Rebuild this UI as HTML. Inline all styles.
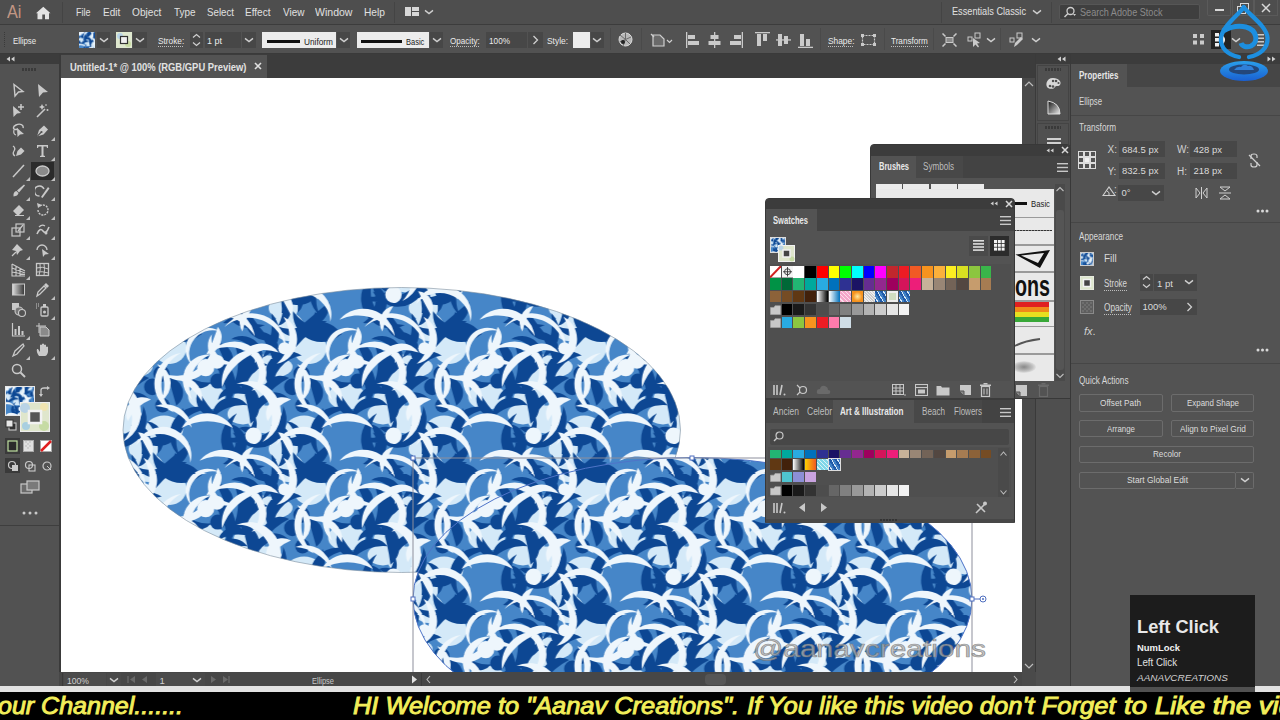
<!DOCTYPE html><html><head><meta charset="utf-8"><style>*{margin:0;padding:0;box-sizing:border-box}
html,body{width:1280px;height:720px;overflow:hidden;background:#535353;font-family:"Liberation Sans",sans-serif;color:#dcdcdc}
.a{position:absolute}
.t{position:absolute;white-space:nowrap;line-height:1}
</style></head><body><div class="a" style="left:0px;top:0px;width:1280px;height:24px;background:#4e4e4e;"></div>
<div class="a" style="left:0px;top:24px;width:1280px;height:1px;background:#3c3c3c;"></div>
<div class="a" style="left:0px;top:25px;width:1280px;height:28px;background:#525252;"></div>
<div class="a" style="left:0px;top:53px;width:1280px;height:1px;background:#3a3a3a;"></div>
<div class="a" style="left:0px;top:54px;width:1280px;height:10px;background:#3c3c3c;"></div>
<div class="a" style="left:0px;top:64px;width:59px;height:608px;background:#525252;"></div>
<div class="a" style="left:59px;top:54px;width:2px;height:632px;background:#3a3a3a;"></div>
<div class="a" style="left:61px;top:54px;width:975px;height:24px;background:#3c3c3c;"></div>
<div class="a" style="left:61px;top:55px;width:206px;height:23px;background:#535353;"></div>
<div class="a" style="left:61px;top:78px;width:961px;height:594px;background:#ffffff;"></div>
<div class="a" style="left:1022px;top:78px;width:14px;height:594px;background:#4a4a4a;"></div>
<div class="a" style="left:0px;top:672px;width:59px;height:14px;background:#525252;"></div>
<div class="a" style="left:59px;top:672px;width:977px;height:14px;background:#474747;"></div>
<div class="a" style="left:1035px;top:54px;width:1px;height:632px;background:#3a3a3a;"></div>
<div class="a" style="left:1036px;top:64px;width:35px;height:622px;background:#4f4f4f;"></div>
<div class="a" style="left:1070px;top:54px;width:1px;height:632px;background:#3a3a3a;"></div>
<div class="a" style="left:1071px;top:64px;width:209px;height:622px;background:#535353;"></div>
<div class="a" style="left:0px;top:686px;width:1280px;height:6px;background:#e2e2e2;"></div>
<div class="a" style="left:0px;top:692px;width:1280px;height:28px;background:#000000;"></div>
<div class="t fw" style="left:7.3px;top:2.56px;font-size:18px;color:#c29684;--w:14.5px;">Ai</div>
<svg class="a" style="left:36px;top:6px;" width="15" height="14" viewBox="0 0 15 14"><path d="M7.3,0.8 L14.5,7.3 L13,7.3 L13,13.2 L9,13.2 L9,8.5 L6.3,8.5 L6.3,13.2 L1.5,13.2 L1.5,7.3 L0,7.3 Z" fill="#e2e2e2"/></svg>
<div class="a" style="left:62px;top:2px;width:1px;height:21px;background:#444444;"></div>
<div class="t fw" style="left:75.8px;top:6.71px;font-size:10.5px;color:#e0e0e0;--w:14.5px;">File</div>
<div class="t fw" style="left:102.7px;top:6.71px;font-size:10.5px;color:#e0e0e0;--w:17.3px;">Edit</div>
<div class="t fw" style="left:132px;top:6.71px;font-size:10.5px;color:#e0e0e0;--w:29.3px;">Object</div>
<div class="t fw" style="left:173.5px;top:6.71px;font-size:10.5px;color:#e0e0e0;--w:21.5px;">Type</div>
<div class="t fw" style="left:206.5px;top:6.71px;font-size:10.5px;color:#e0e0e0;--w:27px;">Select</div>
<div class="t fw" style="left:245px;top:6.71px;font-size:10.5px;color:#e0e0e0;--w:25.5px;">Effect</div>
<div class="t fw" style="left:282.5px;top:6.71px;font-size:10.5px;color:#e0e0e0;--w:21.5px;">View</div>
<div class="t fw" style="left:315px;top:6.71px;font-size:10.5px;color:#e0e0e0;--w:37.5px;">Window</div>
<div class="t fw" style="left:363.5px;top:6.71px;font-size:10.5px;color:#e0e0e0;--w:21px;">Help</div>
<div class="a" style="left:394px;top:2px;width:1px;height:21px;background:#444444;"></div>
<svg class="a" style="left:405px;top:7px;" width="14" height="9" viewBox="0 0 14 9"><rect x="0" y="0" width="6" height="9" fill="#d8d8d8"/><rect x="7" y="0" width="7" height="4" fill="#d8d8d8"/><rect x="7" y="5" width="7" height="4" fill="#d8d8d8"/></svg>
<svg class="a" style="left:424px;top:7.5px;" width="10" height="8" viewBox="0 0 10 8"><path d="M1,2.4 L5,5.6 L9,2.4" stroke="#d0d0d0" stroke-width="1.4" fill="none"/></svg>
<div class="a" style="left:941px;top:2px;width:1px;height:21px;background:#444444;"></div>
<div class="t fw" style="left:952px;top:5.86px;font-size:10.8px;color:#e0e0e0;--w:74px;">Essentials Classic</div>
<svg class="a" style="left:1031.5px;top:8px;" width="10" height="8" viewBox="0 0 10 8"><path d="M1,2.4 L5,5.6 L9,2.4" stroke="#d0d0d0" stroke-width="1.4" fill="none"/></svg>
<div class="a" style="left:1051px;top:2px;width:1px;height:21px;background:#444444;"></div>
<div class="a" style="left:1059px;top:4px;width:141px;height:16px;background:#3f3f3f;border:1px solid #565656;border-radius:2px"></div>
<svg class="a" style="left:1063px;top:6px;" width="14" height="12" viewBox="0 0 14 12"><circle cx="7.5" cy="5" r="3.5" stroke="#cfcfcf" stroke-width="1.3" fill="none"/><path d="M5,7.5 L1.5,11" stroke="#cfcfcf" stroke-width="1.5"/><path d="M10,8 L13,8 L11.5,10Z" fill="#cfcfcf"/></svg>
<div class="t fw" style="left:1080px;top:6.61px;font-size:10.5px;color:#8c8c8c;--w:82.5px;">Search Adobe Stock</div>
<div class="a" style="left:1207px;top:0px;width:24px;height:16px;background:#4e4e4e;border:1px solid #5a5a5a;border-top:none;border-radius:0 0 2px 2px"></div>
<div class="a" style="left:1215px;top:9px;width:9px;height:2px;background:#d8d8d8;"></div>
<div class="a" style="left:1232px;top:0px;width:22px;height:16px;background:#4e4e4e;border:1px solid #5a5a5a;border-top:none"></div>
<svg class="a" style="left:1237px;top:3px;" width="12" height="11" viewBox="0 0 12 11"><rect x="3.5" y="0.5" width="8" height="7" stroke="#d8d8d8" stroke-width="1" fill="none"/><rect x="0.5" y="3.5" width="8" height="7" stroke="#d8d8d8" stroke-width="1" fill="#4e4e4e"/></svg>
<div class="a" style="left:1254px;top:0px;width:24px;height:16px;background:#4e4e4e;border:1px solid #5a5a5a;border-top:none"></div>
<svg class="a" style="left:1261px;top:3px;" width="10" height="10" viewBox="0 0 10 10"><path d="M1,1 L9,9 M9,1 L1,9" stroke="#d8d8d8" stroke-width="1.5"/></svg>
<div class="a" style="left:4px;top:32px;width:1px;height:16px;background:repeating-linear-gradient(180deg,#3a3a3a 0 1px,transparent 1px 2px)"></div>
<div class="t fw" style="left:12.8px;top:36.26px;font-size:9.5px;color:#ebebeb;--w:23.2px;">Ellipse</div>
<svg class="a" style="left:79px;top:32px" width="16" height="16"><g transform="scale(0.22)"><rect width="73" height="73" fill="url(#pt)"/></g></svg>
<div class="a" style="left:97px;top:32px;width:13px;height:16px;background:#474747;"></div>
<svg class="a" style="left:98.5px;top:36px;" width="10" height="8" viewBox="0 0 10 8"><path d="M1,2.4 L5,5.6 L9,2.4" stroke="#d0d0d0" stroke-width="1.4" fill="none"/></svg>
<svg class="a" style="left:116px;top:32px" width="16" height="16"><rect width="16" height="16" fill="#dfe8cf"/><circle cx="4" cy="4" r="3" fill="#b8d4e8"/><circle cx="12" cy="12" r="3" fill="#c9dca4"/><rect x="4.5" y="4.5" width="7" height="7" fill="#f0f0f0" stroke="#333" stroke-width="1.2"/></svg>
<div class="a" style="left:133px;top:32px;width:14px;height:16px;background:#474747;"></div>
<svg class="a" style="left:135px;top:36px;" width="10" height="8" viewBox="0 0 10 8"><path d="M1,2.4 L5,5.6 L9,2.4" stroke="#d0d0d0" stroke-width="1.4" fill="none"/></svg>
<div class="t fw" style="left:158px;top:36.26px;font-size:9.5px;color:#ebebeb;--w:26.2px;">Stroke:</div>
<div class="a" style="left:158px;top:46px;width:26px;height:1px;background:repeating-linear-gradient(90deg,#bdbdbd 0 1px,transparent 1px 2px)"></div>
<div class="a" style="left:190px;top:32px;width:13px;height:16px;background:#474747;"></div>
<svg class="a" style="left:192px;top:33px;" width="9" height="14" viewBox="0 0 9 14"><path d="M1,4.5 L4.5,1.5 L8,4.5 M1,9.5 L4.5,12.5 L8,9.5" stroke="#d0d0d0" stroke-width="1.2" fill="none"/></svg>
<div class="a" style="left:205px;top:32px;width:36px;height:16px;background:#474747;"></div>
<div class="t fw" style="left:207px;top:36.26px;font-size:9.5px;color:#ebebeb;--w:15px;">1 pt</div>
<div class="a" style="left:242px;top:32px;width:14px;height:16px;background:#474747;"></div>
<svg class="a" style="left:244px;top:36px;" width="10" height="8" viewBox="0 0 10 8"><path d="M1,2.4 L5,5.6 L9,2.4" stroke="#d0d0d0" stroke-width="1.4" fill="none"/></svg>
<div class="a" style="left:261.5px;top:32px;width:74.5px;height:16px;background:#ececec;"></div>
<div class="a" style="left:267px;top:40px;width:33px;height:3px;background:#111;"></div>
<div class="t fw" style="left:304px;top:36.96px;font-size:9.5px;color:#1a1a1a;--w:29px;">Uniform</div>
<div class="a" style="left:337px;top:32px;width:13px;height:16px;background:#474747;"></div>
<svg class="a" style="left:338.5px;top:36px;" width="10" height="8" viewBox="0 0 10 8"><path d="M1,2.4 L5,5.6 L9,2.4" stroke="#d0d0d0" stroke-width="1.4" fill="none"/></svg>
<div class="a" style="left:356.5px;top:32px;width:72px;height:16px;background:#ececec;"></div>
<div class="a" style="left:361px;top:40px;width:41px;height:2.5px;background:#111;"></div>
<div class="t fw" style="left:405.5px;top:36.96px;font-size:9.5px;color:#1a1a1a;--w:18.3px;">Basic</div>
<div class="a" style="left:430px;top:32px;width:13px;height:16px;background:#474747;"></div>
<svg class="a" style="left:431.5px;top:36px;" width="10" height="8" viewBox="0 0 10 8"><path d="M1,2.4 L5,5.6 L9,2.4" stroke="#d0d0d0" stroke-width="1.4" fill="none"/></svg>
<div class="t fw" style="left:450.3px;top:36.26px;font-size:9.5px;color:#ebebeb;--w:29.7px;">Opacity:</div>
<div class="a" style="left:450px;top:46px;width:30px;height:1px;background:repeating-linear-gradient(90deg,#bdbdbd 0 1px,transparent 1px 2px)"></div>
<div class="a" style="left:486px;top:32px;width:41px;height:16px;background:#474747;"></div>
<div class="t fw" style="left:489px;top:36.26px;font-size:9.5px;color:#ebebeb;--w:21px;">100%</div>
<div class="a" style="left:528px;top:32px;width:14.5px;height:16px;background:#474747;"></div>
<svg class="a" style="left:532px;top:35px;" width="7" height="10" viewBox="0 0 7 10"><path d="M1.5,1 L5.5,5 L1.5,9" stroke="#d0d0d0" stroke-width="1.3" fill="none"/></svg>
<div class="t fw" style="left:547px;top:36.26px;font-size:9.5px;color:#ebebeb;--w:21px;">Style:</div>
<div class="a" style="left:573px;top:32px;width:16.5px;height:16px;background:#ececec;"></div>
<div class="a" style="left:590.5px;top:32px;width:13.5px;height:16px;background:#474747;"></div>
<svg class="a" style="left:592px;top:36px;" width="10" height="8" viewBox="0 0 10 8"><path d="M1,2.4 L5,5.6 L9,2.4" stroke="#d0d0d0" stroke-width="1.4" fill="none"/></svg>
<div class="a" style="left:610px;top:28px;width:1px;height:22px;background:#4a4a4a;"></div>
<svg class="a" style="left:618px;top:32px;" width="15" height="15" viewBox="0 0 15 15"><circle cx="7.5" cy="7.5" r="6.5" fill="#b8b8b8" stroke="#dadada" stroke-width="1"/><path d="M7.5,7.5 L7.5,1 M7.5,7.5 L13,5 M7.5,7.5 L12,12 M7.5,7.5 L5,14 M7.5,7.5 L1.5,10 M7.5,7.5 L2,3" stroke="#6a6a6a" stroke-width="1"/><circle cx="5" cy="10" r="2" fill="#222"/></svg>
<div class="a" style="left:641px;top:28px;width:1px;height:22px;background:#4a4a4a;"></div>
<svg class="a" style="left:650px;top:33px;" width="24" height="14" viewBox="0 0 24 14"><path d="M3,2 L10,2 L14,6 L14,13 L3,13 Z" fill="#6a6a6a" stroke="#cfcfcf" stroke-width="1.2"/><path d="M1,1 L4,4" stroke="#cfcfcf" stroke-width="1.2"/><path d="M17,7 L19.5,9.5 L22,7" stroke="#cfcfcf" stroke-width="1.2" fill="none"/></svg>
<svg class="a" style="left:686px;top:32px;" width="14" height="16" viewBox="0 0 14 16"><rect x="0" y="0" width="1.3" height="16" fill="#cacaca"/><rect x="2" y="3" width="7" height="4" fill="#cacaca"/><rect x="2" y="9" width="11" height="4" fill="#cacaca"/></svg>
<svg class="a" style="left:708px;top:32px;" width="13" height="16" viewBox="0 0 13 16"><rect x="6" y="0" width="1.3" height="16" fill="#cacaca"/><rect x="2.5" y="3" width="8" height="4" fill="#cacaca"/><rect x="0.5" y="9" width="12" height="4" fill="#cacaca"/></svg>
<svg class="a" style="left:730px;top:32px;" width="13" height="16" viewBox="0 0 13 16"><rect x="11.7" y="0" width="1.3" height="16" fill="#cacaca"/><rect x="4" y="3" width="7" height="4" fill="#cacaca"/><rect x="0" y="9" width="11" height="4" fill="#cacaca"/></svg>
<svg class="a" style="left:755px;top:32px;" width="15" height="16" viewBox="0 0 15 16"><rect x="0" y="0" width="15" height="1.3" fill="#cacaca"/><rect x="2" y="2" width="4" height="12" fill="#cacaca"/><rect x="8" y="2" width="4" height="7" fill="#cacaca"/></svg>
<svg class="a" style="left:776px;top:32px;" width="15" height="16" viewBox="0 0 15 16"><rect x="0" y="7.3" width="15" height="1.3" fill="#cacaca"/><rect x="2" y="2" width="4" height="12" fill="#cacaca"/><rect x="8" y="4" width="4" height="8" fill="#cacaca"/></svg>
<svg class="a" style="left:798px;top:32px;" width="15" height="16" viewBox="0 0 15 16"><rect x="0" y="14.7" width="15" height="1.3" fill="#cacaca"/><rect x="2" y="2" width="4" height="12" fill="#cacaca"/><rect x="8" y="7" width="4" height="7" fill="#cacaca"/></svg>
<div class="a" style="left:820px;top:28px;width:1px;height:22px;background:#4a4a4a;"></div>
<div class="t fw" style="left:827.5px;top:36.26px;font-size:9.5px;color:#ebebeb;--w:26.5px;">Shape:</div>
<div class="a" style="left:828px;top:46px;width:26px;height:1px;background:repeating-linear-gradient(90deg,#bdbdbd 0 1px,transparent 1px 2px)"></div>
<svg class="a" style="left:861px;top:34px;" width="15" height="12" viewBox="0 0 15 12"><rect x="1.5" y="1.5" width="12" height="9" fill="none" stroke="#cacaca" stroke-width="1.2" stroke-dasharray="2 1"/><rect x="0" y="0" width="3" height="3" fill="#cacaca"/><rect x="12" y="0" width="3" height="3" fill="#cacaca"/><rect x="0" y="9" width="3" height="3" fill="#cacaca"/><rect x="12" y="9" width="3" height="3" fill="#cacaca"/></svg>
<div class="a" style="left:884px;top:28px;width:1px;height:22px;background:#4a4a4a;"></div>
<div class="t fw" style="left:891px;top:36.26px;font-size:9.5px;color:#ebebeb;--w:36.7px;">Transform</div>
<div class="a" style="left:891px;top:46px;width:37px;height:1px;background:repeating-linear-gradient(90deg,#bdbdbd 0 1px,transparent 1px 2px)"></div>
<div class="a" style="left:933px;top:28px;width:1px;height:22px;background:#4a4a4a;"></div>
<svg class="a" style="left:942px;top:33px;" width="15" height="14" viewBox="0 0 15 14"><rect x="4" y="4.5" width="7" height="5" fill="#8a8a8a" stroke="#cacaca" stroke-width="1"/><path d="M0.5,0.5 L3.5,3.5 M14.5,0.5 L11.5,3.5 M0.5,13.5 L3.5,10.5 M14.5,13.5 L11.5,10.5" stroke="#cacaca" stroke-width="1.5"/></svg>
<svg class="a" style="left:967px;top:32px;" width="15" height="16" viewBox="0 0 15 16"><rect x="1" y="5" width="4" height="4" fill="none" stroke="#cacaca" stroke-width="1"/><rect x="8" y="1" width="5" height="5" fill="none" stroke="#cacaca" stroke-width="1"/><path d="M6,6 L6,15 L8.5,12.5 L11,15.5 L12,14.5 L10,11.5 L13,11 Z" fill="#cacaca"/></svg>
<svg class="a" style="left:985.5px;top:36px;" width="10" height="8" viewBox="0 0 10 8"><path d="M1,2.4 L5,5.6 L9,2.4" stroke="#d0d0d0" stroke-width="1.4" fill="none"/></svg>
<div class="a" style="left:1000px;top:28px;width:1px;height:22px;background:#4a4a4a;"></div>
<svg class="a" style="left:1009px;top:32px;" width="15" height="16" viewBox="0 0 15 16"><rect x="1" y="6" width="4" height="4" fill="none" stroke="#cacaca" stroke-width="1"/><rect x="8" y="1" width="5" height="5" fill="none" stroke="#cacaca" stroke-width="1"/><path d="M5,15 L6,11 L12,5 L14,7 L8,13 Z" fill="#cacaca"/></svg>
<svg class="a" style="left:1030.5px;top:36px;" width="10" height="8" viewBox="0 0 10 8"><path d="M1,2.4 L5,5.6 L9,2.4" stroke="#d0d0d0" stroke-width="1.4" fill="none"/></svg>
<svg class="a" style="left:1193px;top:34px;" width="12" height="11" viewBox="0 0 12 11"><rect x="0" y="0" width="4" height="4" fill="#cacaca"/><rect x="7" y="0" width="4" height="4" fill="#cacaca"/><rect x="0" y="6.5" width="4" height="4" fill="#cacaca"/><rect x="7" y="6.5" width="4" height="4" fill="#cacaca"/></svg>
<div class="a" style="left:1211px;top:30px;width:20px;height:19px;background:#222222;"></div>
<svg class="a" style="left:1215px;top:33px;" width="13" height="14" viewBox="0 0 13 14"><rect x="0" y="0" width="4" height="3.5" fill="#eee"/><rect x="0" y="5" width="4" height="3.5" fill="#eee"/><rect x="0" y="10" width="4" height="3.5" fill="#eee"/><path d="M7,3 Q11,7 7,11" stroke="#eee" stroke-width="2" fill="none"/></svg>
<svg class="a" style="left:1231px;top:36px;" width="10" height="8" viewBox="0 0 10 8"><path d="M1,2.4 L5,5.6 L9,2.4" stroke="#d0d0d0" stroke-width="1.4" fill="none"/></svg>
<svg class="a" style="left:1254px;top:34px;" width="10" height="12" viewBox="0 0 10 12"><rect x="0" y="0" width="2" height="2" fill="#cacaca"/><rect x="3" y="0" width="7" height="1.5" fill="#cacaca"/><rect x="3" y="3.5" width="7" height="1.5" fill="#cacaca"/><rect x="3" y="7" width="7" height="1.5" fill="#cacaca"/><rect x="3" y="10.5" width="7" height="1.5" fill="#cacaca"/></svg>
<div class="a" style="left:0px;top:54px;width:59px;height:10px;background:#3c3c3c;"></div>
<svg class="a" style="left:6px;top:56px;" width="9" height="6" viewBox="0 0 9 6"><path d="M4,0.5 L0.5,3 L4,5.5Z M8.5,0.5 L5,3 L8.5,5.5Z" fill="#d0d0d0"/></svg>
<div class="a" style="left:22px;top:68px;width:15px;height:3px;background:repeating-linear-gradient(90deg,#3a3a3a 0 2px,transparent 2px 3px)"></div>
<div class="a" style="left:31px;top:162px;width:23px;height:18px;background:#2b2b2b;"></div>
<svg class="a" style="left:10.5px;top:83.3px;" width="16" height="16" viewBox="0 0 16 16"><path d="M3,1.5 L12,8.5 L7.5,9 L4,13 Z" fill="none" stroke="#c9c9c9" stroke-width="1.4"/></svg>
<svg class="a" style="left:35.0px;top:83.3px;" width="16" height="16" viewBox="0 0 16 16"><path d="M3,1 L13,9 L8,9.5 L4,14 Z" fill="#c9c9c9"/></svg>
<svg class="a" style="left:10.5px;top:103.3px;" width="16" height="16" viewBox="0 0 16 16"><path d="M2,3 L10,10 L6,10.5 L2.5,14 Z" fill="#c9c9c9"/><path d="M10,1 L10,7 M7,4 L13,4" stroke="#c9c9c9" stroke-width="1.5"/></svg>
<svg class="a" style="left:35.0px;top:103.3px;" width="16" height="16" viewBox="0 0 16 16"><path d="M2,14 L10,6" stroke="#c9c9c9" stroke-width="1.6"/><path d="M6,3 L7,1 L8,3 L10,4 L8,5 L7,7 L6,5 L4,4Z M11,1 L12,2 L11,3 L10,2Z" fill="#c9c9c9"/><circle cx="12.5" cy="7" r="1" fill="#c9c9c9"/></svg>
<svg class="a" style="left:10.5px;top:123px;" width="16" height="16" viewBox="0 0 16 16"><path d="M7,6 C2,8 1,4 5,2 C9,0 13,2 12,5" stroke="#c9c9c9" stroke-width="1.4" fill="none"/><path d="M6,5 L13,11 L9,11.5 L6.5,14 Z" fill="#c9c9c9"/><path d="M3,7 Q2,11 5,12" stroke="#c9c9c9" stroke-width="1.2" fill="none"/></svg>
<svg class="a" style="left:35.0px;top:123px;" width="16" height="16" viewBox="0 0 16 16"><path d="M2,13.5 L4,7 L9,2.5 L13,6.5 L8.5,11.5 Z" fill="#c9c9c9"/><path d="M2,13.5 L6.5,9" stroke="#525252" stroke-width="1.1"/><circle cx="6.5" cy="9" r="1.1" fill="#525252"/></svg>
<svg class="a" style="left:50.5px;top:137px;" width="4" height="4" viewBox="0 0 4 4"><path d="M4,0 L4,4 L0,4Z" fill="#c0c0c0"/></svg>
<svg class="a" style="left:10.5px;top:142.7px;" width="16" height="16" viewBox="0 0 16 16"><path d="M5,13 L6.5,8 L10,4.5 L13.5,8 L10,11.5 Z" fill="#c9c9c9"/><path d="M4,13 Q1,11 3,8 Q5,5 2,3" stroke="#c9c9c9" stroke-width="1.3" fill="none"/></svg>
<svg class="a" style="left:35.0px;top:142.7px;" width="16" height="16" viewBox="0 0 16 16"><path d="M2,2 L13,2 L13,5 L12,5 L11.5,3.5 L8.5,3.5 L8.5,12.5 L10,13 L10,14 L5,14 L5,13 L6.5,12.5 L6.5,3.5 L3.5,3.5 L3,5 L2,5 Z" fill="#c9c9c9"/></svg>
<svg class="a" style="left:50.5px;top:156.7px;" width="4" height="4" viewBox="0 0 4 4"><path d="M4,0 L4,4 L0,4Z" fill="#c0c0c0"/></svg>
<svg class="a" style="left:10.5px;top:162.5px;" width="16" height="16" viewBox="0 0 16 16"><path d="M2,14 L13,2" stroke="#c9c9c9" stroke-width="1.5"/></svg>
<svg class="a" style="left:26px;top:176.5px;" width="4" height="4" viewBox="0 0 4 4"><path d="M4,0 L4,4 L0,4Z" fill="#c0c0c0"/></svg>
<svg class="a" style="left:35.0px;top:162.5px;" width="16" height="16" viewBox="0 0 16 16"><ellipse cx="7.5" cy="8" rx="6.5" ry="5" fill="#8a8a8a" stroke="#c9c9c9" stroke-width="1.3"/></svg>
<svg class="a" style="left:50.5px;top:176.5px;" width="4" height="4" viewBox="0 0 4 4"><path d="M4,0 L4,4 L0,4Z" fill="#c0c0c0"/></svg>
<svg class="a" style="left:10.5px;top:182.5px;" width="16" height="16" viewBox="0 0 16 16"><path d="M13,1.5 L14,2.5 L8,9.5 L6,7.5 Z" fill="#c9c9c9"/><path d="M5.5,8 Q2,8.5 2.5,13.5 Q7,13 7.5,10 Z" fill="#c9c9c9"/></svg>
<svg class="a" style="left:26px;top:196.5px;" width="4" height="4" viewBox="0 0 4 4"><path d="M4,0 L4,4 L0,4Z" fill="#c0c0c0"/></svg>
<svg class="a" style="left:35.0px;top:182.5px;" width="16" height="16" viewBox="0 0 16 16"><path d="M9,6 A5,5 0 1 0 4.5,13" stroke="#c9c9c9" stroke-width="1.5" fill="none"/><path d="M6,14 L13,4 L14.5,5.5 L7.5,15 Z" fill="#c9c9c9"/></svg>
<svg class="a" style="left:50.5px;top:196.5px;" width="4" height="4" viewBox="0 0 4 4"><path d="M4,0 L4,4 L0,4Z" fill="#c0c0c0"/></svg>
<svg class="a" style="left:10.5px;top:202.3px;" width="16" height="16" viewBox="0 0 16 16"><path d="M2,9 L8,3 L13,8 L7,14 Z" fill="#c9c9c9"/><path d="M4,13.5 L13,13.5" stroke="#c9c9c9" stroke-width="1"/></svg>
<svg class="a" style="left:26px;top:216.3px;" width="4" height="4" viewBox="0 0 4 4"><path d="M4,0 L4,4 L0,4Z" fill="#c0c0c0"/></svg>
<svg class="a" style="left:35.0px;top:202.3px;" width="16" height="16" viewBox="0 0 16 16"><path d="M3,8 A5,5 0 1 0 5,4" stroke="#c9c9c9" stroke-width="1.4" fill="none" stroke-dasharray="2 1"/><path d="M2,1 L7,3 L3,6 Z" fill="#c9c9c9"/></svg>
<svg class="a" style="left:50.5px;top:216.3px;" width="4" height="4" viewBox="0 0 4 4"><path d="M4,0 L4,4 L0,4Z" fill="#c0c0c0"/></svg>
<svg class="a" style="left:10.5px;top:222.2px;" width="16" height="16" viewBox="0 0 16 16"><rect x="1" y="6" width="8" height="8" fill="none" stroke="#c9c9c9" stroke-width="1.2"/><rect x="5" y="2" width="8" height="8" fill="none" stroke="#c9c9c9" stroke-width="1.2"/><path d="M7,9 L12,3" stroke="#c9c9c9" stroke-width="1.2"/></svg>
<svg class="a" style="left:26px;top:236.2px;" width="4" height="4" viewBox="0 0 4 4"><path d="M4,0 L4,4 L0,4Z" fill="#c0c0c0"/></svg>
<svg class="a" style="left:35.0px;top:222.2px;" width="16" height="16" viewBox="0 0 16 16"><path d="M2,12 Q5,5 8,9 T14,5" stroke="#c9c9c9" stroke-width="1.6" fill="none"/><path d="M4,5 Q7,2 10,4" stroke="#c9c9c9" stroke-width="1.2" fill="none"/><circle cx="11" cy="11" r="1.5" fill="#c9c9c9"/></svg>
<svg class="a" style="left:50.5px;top:236.2px;" width="4" height="4" viewBox="0 0 4 4"><path d="M4,0 L4,4 L0,4Z" fill="#c0c0c0"/></svg>
<svg class="a" style="left:10.5px;top:242px;" width="16" height="16" viewBox="0 0 16 16"><path d="M6,2 L12,8 L9,9 L6,13 L5,9 L1,8 Z" fill="#c9c9c9"/><path d="M1,14 L5,10" stroke="#c9c9c9" stroke-width="1.2"/></svg>
<svg class="a" style="left:26px;top:256px;" width="4" height="4" viewBox="0 0 4 4"><path d="M4,0 L4,4 L0,4Z" fill="#c0c0c0"/></svg>
<svg class="a" style="left:35.0px;top:242px;" width="16" height="16" viewBox="0 0 16 16"><path d="M2,8 A5,5 0 0 1 12,8" stroke="#c9c9c9" stroke-width="1.3" fill="none"/><path d="M7,7 L14,12 L10,12.5 L8,15 Z" fill="#c9c9c9"/></svg>
<svg class="a" style="left:50.5px;top:256px;" width="4" height="4" viewBox="0 0 4 4"><path d="M4,0 L4,4 L0,4Z" fill="#c0c0c0"/></svg>
<svg class="a" style="left:10.5px;top:261.5px;" width="16" height="16" viewBox="0 0 16 16"><path d="M1,2 L1,14 L14,14 M1,2 L14,9 M1,6 L14,11 M1,10 L14,12.5 M5,4 L5,14 M9,6.5 L9,14" stroke="#c9c9c9" stroke-width="1.1" fill="none"/></svg>
<svg class="a" style="left:26px;top:275.5px;" width="4" height="4" viewBox="0 0 4 4"><path d="M4,0 L4,4 L0,4Z" fill="#c0c0c0"/></svg>
<svg class="a" style="left:35.0px;top:261.5px;" width="16" height="16" viewBox="0 0 16 16"><rect x="1.5" y="1.5" width="12" height="12" fill="none" stroke="#c9c9c9" stroke-width="1.3"/><path d="M1.5,6 Q7,4 13.5,7 M1.5,10 Q7,9 13.5,11 M5,1.5 Q6,7 4,13.5 M9,1.5 Q10,8 9,13.5" stroke="#c9c9c9" stroke-width="1" fill="none"/></svg>
<svg class="a" style="left:10.5px;top:282px;" width="16" height="16" viewBox="0 0 16 16"><defs><linearGradient id="gg"><stop offset="0" stop-color="#ddd"/><stop offset="1" stop-color="#333"/></linearGradient></defs><rect x="1.5" y="2" width="12" height="11" fill="url(#gg)" stroke="#c9c9c9" stroke-width="1"/></svg>
<svg class="a" style="left:35.0px;top:282px;" width="16" height="16" viewBox="0 0 16 16"><path d="M2,14 L3,10 L9,4 L11,6 L5,12 Z" fill="none" stroke="#c9c9c9" stroke-width="1.3"/><path d="M9,3 L11,1 L14,4 L12,6 Z" fill="#c9c9c9"/></svg>
<svg class="a" style="left:50.5px;top:296px;" width="4" height="4" viewBox="0 0 4 4"><path d="M4,0 L4,4 L0,4Z" fill="#c0c0c0"/></svg>
<svg class="a" style="left:10.5px;top:301.8px;" width="16" height="16" viewBox="0 0 16 16"><rect x="1" y="1" width="7" height="7" fill="#c9c9c9"/><circle cx="8" cy="9" r="4" fill="#777" stroke="#c9c9c9" stroke-width="1.1"/><circle cx="11" cy="11" r="3.5" fill="#525252" stroke="#c9c9c9" stroke-width="1.1"/></svg>
<svg class="a" style="left:35.0px;top:301.8px;" width="16" height="16" viewBox="0 0 16 16"><rect x="6" y="5" width="7" height="9" rx="1" fill="none" stroke="#c9c9c9" stroke-width="1.3"/><rect x="8" y="2" width="3" height="3" fill="#c9c9c9"/><circle cx="9.5" cy="10" r="1.5" fill="#c9c9c9"/><path d="M1,2h1M3,2h1M1,4h1M3,4h1M1,6h1" stroke="#c9c9c9" stroke-width="1"/></svg>
<svg class="a" style="left:50.5px;top:315.8px;" width="4" height="4" viewBox="0 0 4 4"><path d="M4,0 L4,4 L0,4Z" fill="#c0c0c0"/></svg>
<svg class="a" style="left:10.5px;top:322.3px;" width="16" height="16" viewBox="0 0 16 16"><path d="M1.5,1 L1.5,14 L14,14" stroke="#c9c9c9" stroke-width="1.2" fill="none"/><rect x="3.5" y="7" width="2" height="6" fill="#c9c9c9"/><rect x="7" y="4" width="2" height="9" fill="#c9c9c9"/><rect x="10.5" y="9" width="2" height="4" fill="#c9c9c9"/></svg>
<svg class="a" style="left:26px;top:336.3px;" width="4" height="4" viewBox="0 0 4 4"><path d="M4,0 L4,4 L0,4Z" fill="#c0c0c0"/></svg>
<svg class="a" style="left:35.0px;top:322.3px;" width="16" height="16" viewBox="0 0 16 16"><path d="M1,4 L11,4 M4,1 L4,11" stroke="#c9c9c9" stroke-width="1"/><path d="M5,5 L11,5 L14,8 L14,14 L5,14 Z" fill="#8a8a8a" stroke="#c9c9c9" stroke-width="1"/></svg>
<svg class="a" style="left:10.5px;top:342px;" width="16" height="16" viewBox="0 0 16 16"><path d="M2,14 L4,9 L12,2 L13,4 L6,12 Z" fill="none" stroke="#c9c9c9" stroke-width="1.3"/></svg>
<svg class="a" style="left:26px;top:356px;" width="4" height="4" viewBox="0 0 4 4"><path d="M4,0 L4,4 L0,4Z" fill="#c0c0c0"/></svg>
<svg class="a" style="left:35.0px;top:342px;" width="16" height="16" viewBox="0 0 16 16"><path d="M4,14 Q1,10 2,7 L3,7 L5,10 L5,3 Q6,2 7,3 L7,8 L7,2 Q8,1 9,2 L9,8 L9,3 Q10,2 11,3 L11,8 L11,5 Q12,4 13,5 L13,10 Q12,14 10,14 Z" fill="#c9c9c9"/></svg>
<svg class="a" style="left:50.5px;top:356px;" width="4" height="4" viewBox="0 0 4 4"><path d="M4,0 L4,4 L0,4Z" fill="#c0c0c0"/></svg>
<svg class="a" style="left:10.5px;top:362.8px;" width="16" height="16" viewBox="0 0 16 16"><circle cx="6" cy="6" r="4.5" fill="none" stroke="#c9c9c9" stroke-width="1.5"/><path d="M9.5,9.5 L14,14" stroke="#c9c9c9" stroke-width="2"/></svg>
<svg class="a" style="left:5px;top:386px" width="30" height="30"><g transform="scale(0.3)"><rect width="100" height="100" fill="url(#pt)"/></g><rect x="0.5" y="0.5" width="29" height="29" fill="none" stroke="#e8e8e8"/></svg>
<svg class="a" style="left:20px;top:402px" width="30" height="30"><rect x="0.5" y="0.5" width="29" height="29" fill="#dfe6cc" stroke="#eee"/><circle cx="5" cy="6" r="5" fill="#b9d3e6"/><circle cx="24" cy="24" r="5" fill="#c6dba4"/><circle cx="24" cy="5" r="4" fill="#f0e4b0"/><circle cx="6" cy="24" r="4" fill="#a9cfe0"/><rect x="9" y="9" width="12" height="12" fill="#555" stroke="#f2f2f2" stroke-width="2.5"/></svg>
<svg class="a" style="left:39px;top:386px;" width="12" height="12" viewBox="0 0 12 12"><path d="M2,10 L2,4 Q2,2 5,2 L9,2" stroke="#c9c9c9" stroke-width="1.3" fill="none"/><path d="M8,0 L11,2 L8,4Z M0,8 L2,11 L4,8Z" fill="#c9c9c9"/></svg>
<svg class="a" style="left:5px;top:419px;" width="12" height="12" viewBox="0 0 12 12"><rect x="4" y="4" width="7" height="7" fill="#333" stroke="#c9c9c9" stroke-width="1.1"/><rect x="1" y="1" width="7" height="7" fill="#e8e8e8" stroke="#333" stroke-width="1"/></svg>
<div class="a" style="left:5px;top:438px;width:15px;height:16px;background:#3a3a3a;"></div>
<svg class="a" style="left:7px;top:440px;" width="11" height="12" viewBox="0 0 11 12"><rect x="1" y="1" width="9" height="10" fill="#2b2b2b" stroke="#bfe0a0" stroke-width="1.2"/></svg>
<svg class="a" style="left:23px;top:440px;" width="11" height="12" viewBox="0 0 11 12"><rect x="0.5" y="0.5" width="10" height="11" fill="#e0e0e0" stroke="#aaa"/><path d="M2,2h2M6,2h2M4,4h2M2,6h2M6,6h2M4,8h2" stroke="#bbb"/></svg>
<svg class="a" style="left:40px;top:440px;" width="12" height="12" viewBox="0 0 12 12"><rect x="0.5" y="0.5" width="11" height="11" fill="#fff" stroke="#aaa"/><path d="M11,1 L1,11" stroke="#e02020" stroke-width="2.5"/></svg>
<div class="a" style="left:5px;top:458px;width:15px;height:15px;background:#3a3a3a;"></div>
<svg class="a" style="left:7px;top:460px;" width="12" height="12" viewBox="0 0 12 12"><circle cx="5" cy="5" r="3.5" fill="none" stroke="#c9c9c9" stroke-width="1.2"/><rect x="5" y="5" width="6" height="6" fill="#c9c9c9"/></svg>
<svg class="a" style="left:24px;top:460px;" width="12" height="12" viewBox="0 0 12 12"><circle cx="5" cy="5" r="3.5" fill="none" stroke="#c9c9c9" stroke-width="1.2"/><rect x="5" y="5" width="6" height="6" fill="none" stroke="#c9c9c9" stroke-width="1.1"/></svg>
<svg class="a" style="left:41px;top:460px;" width="12" height="12" viewBox="0 0 12 12"><circle cx="6" cy="6" r="4" fill="none" stroke="#c9c9c9" stroke-width="1.2"/><path d="M6,6 L10,10" stroke="#c9c9c9"/></svg>
<svg class="a" style="left:20px;top:480px;" width="20" height="15" viewBox="0 0 20 15"><rect x="1" y="4" width="11" height="9" fill="#6a6a6a" stroke="#c9c9c9" stroke-width="1.2"/><rect x="7" y="1" width="12" height="9" fill="#7a7a7a" stroke="#c9c9c9" stroke-width="1.2"/></svg>
<svg class="a" style="left:22px;top:511px;" width="16" height="4" viewBox="0 0 16 4"><circle cx="2" cy="2" r="1.5" fill="#c9c9c9"/><circle cx="8" cy="2" r="1.5" fill="#c9c9c9"/><circle cx="14" cy="2" r="1.5" fill="#c9c9c9"/></svg>
<div class="a" style="left:0px;top:525px;width:59px;height:1px;background:#3e3e3e;"></div>
<div class="t fw" style="left:69.5px;top:62.19px;font-size:11px;color:#e2e2e2;--w:176.5px;font-weight:bold">Untitled-1* @ 100% (RGB/GPU Preview)</div>
<svg class="a" style="left:254px;top:62px;" width="8" height="8" viewBox="0 0 8 8"><path d="M1,1 L7,7 M7,1 L1,7" stroke="#e0e0e0" stroke-width="1.6"/></svg>
<svg class="a" style="left:61px;top:78px" width="961" height="594" viewBox="0 0 961 594">
<defs><pattern id="pt" patternUnits="userSpaceOnUse" width="140" height="141" x="195.7" y="254"><rect width="140" height="141" fill="#4686c8"/><g fill="#d4e9f8"><ellipse cx="31.7" cy="-5.3" rx="15.3" ry="14.2"/><ellipse cx="31.7" cy="135.7" rx="15.3" ry="14.2"/><ellipse cx="11.9" cy="34.9" rx="24.0" ry="11.3"/><ellipse cx="151.9" cy="34.9" rx="24.0" ry="11.3"/><ellipse cx="89.9" cy="64.7" rx="18.5" ry="13.0"/><ellipse cx="26.9" cy="-23.9" rx="14.9" ry="11.4"/><ellipse cx="26.9" cy="117.1" rx="14.9" ry="11.4"/><ellipse cx="166.9" cy="-23.9" rx="14.9" ry="11.4"/><ellipse cx="166.9" cy="117.1" rx="14.9" ry="11.4"/><ellipse cx="2.8" cy="37.6" rx="18.1" ry="15.4"/><ellipse cx="142.8" cy="37.6" rx="18.1" ry="15.4"/><ellipse cx="53.1" cy="16.0" rx="16.6" ry="15.9"/><ellipse cx="53.1" cy="157.0" rx="16.6" ry="15.9"/><ellipse cx="8.8" cy="87.4" rx="17.8" ry="14.0"/><ellipse cx="148.8" cy="87.4" rx="17.8" ry="14.0"/><ellipse cx="47.4" cy="97.5" rx="19.0" ry="13.9"/><ellipse cx="-13.8" cy="82.0" rx="15.4" ry="10.4"/><ellipse cx="126.2" cy="82.0" rx="15.4" ry="10.4"/><ellipse cx="-7.6" cy="68.9" rx="15.9" ry="15.7"/><ellipse cx="132.4" cy="68.9" rx="15.9" ry="15.7"/></g><g fill="#0d4793"><circle cx="44.7" cy="41.8" r="8.1"/><circle cx="45.8" cy="73.3" r="7.3"/><circle cx="101.0" cy="49.1" r="7.5"/><circle cx="35.7" cy="54.9" r="8.3"/><path d="M63.6,-16.2A28.1,28.1 0 0 1 94.3,-63.0A31.6,31.6 0 0 0 63.6,-16.2ZM63.6,124.8A28.1,28.1 0 0 1 94.3,78.0A31.6,31.6 0 0 0 63.6,124.8ZM14.3,-48.1A15.6,15.6 0 0 1 24.9,-18.9A34.6,34.6 0 0 0 14.3,-48.1ZM14.3,92.9A15.6,15.6 0 0 1 24.9,122.1A34.6,34.6 0 0 0 14.3,92.9ZM154.3,-48.1A15.6,15.6 0 0 1 164.9,-18.9A34.6,34.6 0 0 0 154.3,-48.1ZM154.3,92.9A15.6,15.6 0 0 1 164.9,122.1A34.6,34.6 0 0 0 154.3,92.9ZM-38.8,67.9A17.2,17.2 0 0 1 -6.4,63.8A35.0,35.0 0 0 0 -38.8,67.9ZM101.2,67.9A17.2,17.2 0 0 1 133.6,63.8A35.0,35.0 0 0 0 101.2,67.9ZM14.1,8.1A22.1,22.1 0 0 1 -9.9,-23.3A201.8,201.8 0 0 0 14.1,8.1ZM14.1,149.1A22.1,22.1 0 0 1 -9.9,117.7A201.8,201.8 0 0 0 14.1,149.1ZM154.1,8.1A22.1,22.1 0 0 1 130.1,-23.3A201.8,201.8 0 0 0 154.1,8.1ZM154.1,149.1A22.1,22.1 0 0 1 130.1,117.7A201.8,201.8 0 0 0 154.1,149.1ZM-11.4,61.2A18.3,18.3 0 0 1 11.5,33.0A28.2,28.2 0 0 0 -11.4,61.2ZM128.6,61.2A18.3,18.3 0 0 1 151.5,33.0A28.2,28.2 0 0 0 128.6,61.2ZM-25.7,7.3A20.3,20.3 0 0 1 -3.5,41.4A23.5,23.5 0 0 0 -25.7,7.3ZM-25.7,148.3A20.3,20.3 0 0 1 -3.5,182.4A23.5,23.5 0 0 0 -25.7,148.3ZM114.3,7.3A20.3,20.3 0 0 1 136.5,41.4A23.5,23.5 0 0 0 114.3,7.3ZM114.3,148.3A20.3,20.3 0 0 1 136.5,182.4A23.5,23.5 0 0 0 114.3,148.3ZM29.9,-51.7A18.8,18.8 0 0 1 40.7,-18.9A37.1,37.1 0 0 0 29.9,-51.7ZM29.9,89.3A18.8,18.8 0 0 1 40.7,122.1A37.1,37.1 0 0 0 29.9,89.3ZM169.9,-51.7A18.8,18.8 0 0 1 180.7,-18.9A37.1,37.1 0 0 0 169.9,-51.7ZM169.9,89.3A18.8,18.8 0 0 1 180.7,122.1A37.1,37.1 0 0 0 169.9,89.3ZM7.1,67.3A17.7,17.7 0 0 1 32.4,45.9A70.8,70.8 0 0 0 7.1,67.3ZM147.1,67.3A17.7,17.7 0 0 1 172.4,45.9A70.8,70.8 0 0 0 147.1,67.3ZM94.6,50.3A15.5,15.5 0 0 1 66.9,39.7A34.0,34.0 0 0 0 94.6,50.3ZM72.3,-29.9A22.1,22.1 0 0 1 43.9,-6.0L72.3,-29.9ZM72.3,111.1A22.1,22.1 0 0 1 43.9,135.0L72.3,111.1ZM1.6,-0.4A20.2,20.2 0 0 1 17.5,33.2A94.8,94.8 0 0 0 1.6,-0.4ZM1.6,140.6A20.2,20.2 0 0 1 17.5,174.2A94.8,94.8 0 0 0 1.6,140.6ZM141.6,-0.4A20.2,20.2 0 0 1 157.5,33.2A94.8,94.8 0 0 0 141.6,-0.4ZM141.6,140.6A20.2,20.2 0 0 1 157.5,174.2A94.8,94.8 0 0 0 141.6,140.6ZM14.5,-18.9A27.4,27.4 0 0 1 5.6,25.7A68.9,68.9 0 0 0 14.5,-18.9ZM14.5,122.1A27.4,27.4 0 0 1 5.6,166.7A68.9,68.9 0 0 0 14.5,122.1ZM154.5,-18.9A27.4,27.4 0 0 1 145.6,25.7A68.9,68.9 0 0 0 154.5,-18.9ZM154.5,122.1A27.4,27.4 0 0 1 145.6,166.7A68.9,68.9 0 0 0 154.5,122.1ZM8.2,-7.1A29.8,29.8 0 0 1 -19.8,-59.8A33.4,33.4 0 0 0 8.2,-7.1ZM8.2,133.9A29.8,29.8 0 0 1 -19.8,81.2A33.4,33.4 0 0 0 8.2,133.9ZM148.2,-7.1A29.8,29.8 0 0 1 120.2,-59.8A33.4,33.4 0 0 0 148.2,-7.1ZM148.2,133.9A29.8,29.8 0 0 1 120.2,81.2A33.4,33.4 0 0 0 148.2,133.9ZM38.5,15.7A23.7,23.7 0 0 1 70.2,-10.4A109.4,109.4 0 0 0 38.5,15.7ZM38.5,156.7A23.7,23.7 0 0 1 70.2,130.6A109.4,109.4 0 0 0 38.5,156.7ZM-2.6,89.8A21.2,21.2 0 0 1 32.8,67.5A27.4,27.4 0 0 0 -2.6,89.8ZM137.4,89.8A21.2,21.2 0 0 1 172.8,67.5A27.4,27.4 0 0 0 137.4,89.8ZM-36.7,86.5A20.3,20.3 0 0 1 -58.3,58.0A106.2,106.2 0 0 0 -36.7,86.5ZM103.3,86.5A20.3,20.3 0 0 1 81.7,58.0A106.2,106.2 0 0 0 103.3,86.5ZM42.9,-1.3A25.6,25.6 0 0 1 85.0,3.1L42.9,-1.3ZM42.9,139.7A25.6,25.6 0 0 1 85.0,144.1L42.9,139.7ZM51.5,45.5A15.5,15.5 0 0 1 59.6,73.8L51.5,45.5ZM98.1,10.6A17.7,17.7 0 0 1 107.1,43.9A43.6,43.6 0 0 0 98.1,10.6ZM98.1,151.6A17.7,17.7 0 0 1 107.1,184.9A43.6,43.6 0 0 0 98.1,151.6ZM26.6,73.9A28.5,28.5 0 0 1 -24.0,100.4A33.1,33.1 0 0 0 26.6,73.9ZM166.6,73.9A28.5,28.5 0 0 1 116.0,100.4A33.1,33.1 0 0 0 166.6,73.9ZM15.8,58.5A22.8,22.8 0 0 1 45.0,23.6A34.0,34.0 0 0 0 15.8,58.5ZM155.8,58.5A22.8,22.8 0 0 1 185.0,23.6A34.0,34.0 0 0 0 155.8,58.5ZM-16.0,49.3A24.0,24.0 0 0 1 -6.2,91.7A208.7,208.7 0 0 0 -16.0,49.3ZM124.0,49.3A24.0,24.0 0 0 1 133.8,91.7A208.7,208.7 0 0 0 124.0,49.3ZM-10.2,11.3A19.9,19.9 0 0 1 -16.8,46.9L-10.2,11.3ZM-10.2,152.3A19.9,19.9 0 0 1 -16.8,187.9L-10.2,152.3ZM129.8,11.3A19.9,19.9 0 0 1 123.2,46.9L129.8,11.3ZM129.8,152.3A19.9,19.9 0 0 1 123.2,187.9L129.8,152.3ZM66.0,75.7A27.5,27.5 0 0 1 20.7,105.4A37.6,37.6 0 0 0 66.0,75.7ZM-44.8,86.5A19.8,19.8 0 0 1 -9.4,73.2A42.6,42.6 0 0 0 -44.8,86.5ZM95.2,86.5A19.8,19.8 0 0 1 130.6,73.2A42.6,42.6 0 0 0 95.2,86.5ZM-24.6,52.9A15.1,15.1 0 0 1 -31.1,25.4L-24.6,52.9ZM-24.6,193.9A15.1,15.1 0 0 1 -31.1,166.4L-24.6,193.9ZM115.4,52.9A15.1,15.1 0 0 1 108.9,25.4L115.4,52.9ZM115.4,193.9A15.1,15.1 0 0 1 108.9,166.4L115.4,193.9ZM22.5,-41.4A18.4,18.4 0 0 1 21.5,-6.4A40.3,40.3 0 0 0 22.5,-41.4ZM22.5,99.6A18.4,18.4 0 0 1 21.5,134.6A40.3,40.3 0 0 0 22.5,99.6ZM162.5,-41.4A18.4,18.4 0 0 1 161.5,-6.4A40.3,40.3 0 0 0 162.5,-41.4ZM162.5,99.6A18.4,18.4 0 0 1 161.5,134.6A40.3,40.3 0 0 0 162.5,99.6ZM58.9,-20.2A20.6,20.6 0 0 1 20.8,-5.8A28.7,28.7 0 0 0 58.9,-20.2ZM58.9,120.8A20.6,20.6 0 0 1 20.8,135.2A28.7,28.7 0 0 0 58.9,120.8ZM198.9,-20.2A20.6,20.6 0 0 1 160.8,-5.8A28.7,28.7 0 0 0 198.9,-20.2ZM198.9,120.8A20.6,20.6 0 0 1 160.8,135.2A28.7,28.7 0 0 0 198.9,120.8ZM-22.4,11.5A27.0,27.0 0 0 1 -27.8,61.2A54.1,54.1 0 0 0 -22.4,11.5ZM-22.4,152.5A27.0,27.0 0 0 1 -27.8,202.2A54.1,54.1 0 0 0 -22.4,152.5ZM117.6,11.5A27.0,27.0 0 0 1 112.2,61.2A54.1,54.1 0 0 0 117.6,11.5ZM117.6,152.5A27.0,27.0 0 0 1 112.2,202.2A54.1,54.1 0 0 0 117.6,152.5ZM-26.9,-49.0A20.2,20.2 0 0 1 -33.7,-9.1A27.5,27.5 0 0 0 -26.9,-49.0ZM-26.9,92.0A20.2,20.2 0 0 1 -33.7,131.9A27.5,27.5 0 0 0 -26.9,92.0ZM113.1,-49.0A20.2,20.2 0 0 1 106.3,-9.1A27.5,27.5 0 0 0 113.1,-49.0ZM113.1,92.0A20.2,20.2 0 0 1 106.3,131.9A27.5,27.5 0 0 0 113.1,92.0ZM-17.6,-45.0A16.2,16.2 0 0 1 5.0,-29.4L-17.6,-45.0ZM-17.6,96.0A16.2,16.2 0 0 1 5.0,111.6L-17.6,96.0ZM122.4,-45.0A16.2,16.2 0 0 1 145.0,-29.4L122.4,-45.0ZM122.4,96.0A16.2,16.2 0 0 1 145.0,111.6L122.4,96.0ZM88.6,-2.8A28.5,28.5 0 0 1 36.4,-20.8A47.4,47.4 0 0 0 88.6,-2.8ZM88.6,138.2A28.5,28.5 0 0 1 36.4,120.2A47.4,47.4 0 0 0 88.6,138.2ZM-2.2,82.8A19.1,19.1 0 0 1 -33.4,104.4A23.1,23.1 0 0 0 -2.2,82.8ZM137.8,82.8A19.1,19.1 0 0 1 106.6,104.4A23.1,23.1 0 0 0 137.8,82.8ZM87.2,24.7A27.3,27.3 0 0 1 108.4,73.0A45.2,45.2 0 0 0 87.2,24.7Z"/></g><g fill="#eef6fc"><circle cx="89.0" cy="35.7" r="8.6"/><circle cx="27.6" cy="16.3" r="6.1"/><circle cx="100.6" cy="29.9" r="6.9"/><circle cx="-3.2" cy="103.8" r="8.2"/><circle cx="136.8" cy="103.8" r="8.2"/><path d="M-22.3,30.6A18.5,18.5 0 0 1 -44.7,2.3A23.5,23.5 0 0 0 -22.3,30.6ZM-22.3,171.6A18.5,18.5 0 0 1 -44.7,143.3A23.5,23.5 0 0 0 -22.3,171.6ZM117.7,30.6A18.5,18.5 0 0 1 95.3,2.3A23.5,23.5 0 0 0 117.7,30.6ZM117.7,171.6A18.5,18.5 0 0 1 95.3,143.3A23.5,23.5 0 0 0 117.7,171.6ZM26.7,-15.2A25.1,25.1 0 0 1 20.1,31.8A35.9,35.9 0 0 0 26.7,-15.2ZM26.7,125.8A25.1,25.1 0 0 1 20.1,172.8A35.9,35.9 0 0 0 26.7,125.8ZM166.7,-15.2A25.1,25.1 0 0 1 160.1,31.8A35.9,35.9 0 0 0 166.7,-15.2ZM166.7,125.8A25.1,25.1 0 0 1 160.1,172.8A35.9,35.9 0 0 0 166.7,125.8ZM19.2,-27.7A28.7,28.7 0 0 1 73.8,-10.3A30.8,30.8 0 0 0 19.2,-27.7ZM19.2,113.3A28.7,28.7 0 0 1 73.8,130.7A30.8,30.8 0 0 0 19.2,113.3ZM-14.3,-0.6A16.7,16.7 0 0 1 -3.4,-26.1A86.7,86.7 0 0 0 -14.3,-0.6ZM-14.3,140.4A16.7,16.7 0 0 1 -3.4,114.9A86.7,86.7 0 0 0 -14.3,140.4ZM125.7,-0.6A16.7,16.7 0 0 1 136.6,-26.1A86.7,86.7 0 0 0 125.7,-0.6ZM125.7,140.4A16.7,16.7 0 0 1 136.6,114.9A86.7,86.7 0 0 0 125.7,140.4ZM-57.3,-12.2A31.7,31.7 0 0 1 -1.9,4.2A42.7,42.7 0 0 0 -57.3,-12.2ZM-57.3,128.8A31.7,31.7 0 0 1 -1.9,145.2A42.7,42.7 0 0 0 -57.3,128.8ZM82.7,-12.2A31.7,31.7 0 0 1 138.1,4.2A42.7,42.7 0 0 0 82.7,-12.2ZM82.7,128.8A31.7,31.7 0 0 1 138.1,145.2A42.7,42.7 0 0 0 82.7,128.8ZM-20.2,51.7A31.9,31.9 0 0 1 5.7,110.0A34.4,34.4 0 0 0 -20.2,51.7ZM119.8,51.7A31.9,31.9 0 0 1 145.7,110.0A34.4,34.4 0 0 0 119.8,51.7ZM57.4,80.5A30.9,30.9 0 0 1 64.3,21.1A35.9,35.9 0 0 0 57.4,80.5ZM96.9,12.6A30.8,30.8 0 0 1 46.9,41.7A38.2,38.2 0 0 0 96.9,12.6ZM96.9,153.6A30.8,30.8 0 0 1 46.9,182.7A38.2,38.2 0 0 0 96.9,153.6ZM-6.9,22.5A18.3,18.3 0 0 1 -5.0,58.7A23.8,23.8 0 0 0 -6.9,22.5ZM133.1,22.5A18.3,18.3 0 0 1 135.0,58.7A23.8,23.8 0 0 0 133.1,22.5ZM75.5,33.3A21.9,21.9 0 0 1 103.1,-0.5A23.4,23.4 0 0 0 75.5,33.3ZM75.5,174.3A21.9,21.9 0 0 1 103.1,140.5A23.4,23.4 0 0 0 75.5,174.3ZM38.6,74.1A26.4,26.4 0 0 1 74.9,95.7A47.5,47.5 0 0 0 38.6,74.1ZM11.1,89.2A16.5,16.5 0 0 1 34.2,67.5A43.1,43.1 0 0 0 11.1,89.2ZM151.1,89.2A16.5,16.5 0 0 1 174.2,67.5A43.1,43.1 0 0 0 151.1,89.2ZM-32.2,-5.0A34.0,34.0 0 0 1 28.9,18.6A37.0,37.0 0 0 0 -32.2,-5.0ZM-32.2,136.0A34.0,34.0 0 0 1 28.9,159.6A37.0,37.0 0 0 0 -32.2,136.0ZM107.8,-5.0A34.0,34.0 0 0 1 168.9,18.6A37.0,37.0 0 0 0 107.8,-5.0ZM107.8,136.0A34.0,34.0 0 0 1 168.9,159.6A37.0,37.0 0 0 0 107.8,136.0ZM-34.6,55.3A32.9,32.9 0 0 1 6.2,18.6A56.6,56.6 0 0 0 -34.6,55.3ZM105.4,55.3A32.9,32.9 0 0 1 146.2,18.6A56.6,56.6 0 0 0 105.4,55.3ZM40.5,31.9A20.9,20.9 0 0 1 43.8,69.4A36.1,36.1 0 0 0 40.5,31.9ZM180.5,31.9A20.9,20.9 0 0 1 183.8,69.4A36.1,36.1 0 0 0 180.5,31.9ZM101.0,-5.2A16.8,16.8 0 0 1 89.7,22.2A108.7,108.7 0 0 0 101.0,-5.2ZM101.0,135.8A16.8,16.8 0 0 1 89.7,163.2A108.7,108.7 0 0 0 101.0,135.8ZM-15.1,24.8A21.2,21.2 0 0 1 21.9,20.6A40.2,40.2 0 0 0 -15.1,24.8ZM-15.1,165.8A21.2,21.2 0 0 1 21.9,161.6A40.2,40.2 0 0 0 -15.1,165.8ZM124.9,24.8A21.2,21.2 0 0 1 161.9,20.6A40.2,40.2 0 0 0 124.9,24.8ZM124.9,165.8A21.2,21.2 0 0 1 161.9,161.6A40.2,40.2 0 0 0 124.9,165.8ZM65.0,-45.1A29.7,29.7 0 0 1 116.2,-45.1A51.9,51.9 0 0 0 65.0,-45.1ZM65.0,95.9A29.7,29.7 0 0 1 116.2,95.9A51.9,51.9 0 0 0 65.0,95.9ZM-43.7,18.2A31.2,31.2 0 0 1 8.9,43.0A38.8,38.8 0 0 0 -43.7,18.2ZM96.3,18.2A31.2,31.2 0 0 1 148.9,43.0A38.8,38.8 0 0 0 96.3,18.2ZM75.1,67.6A25.6,25.6 0 0 1 93.8,22.6A34.9,34.9 0 0 0 75.1,67.6ZM58.4,45.3A21.7,21.7 0 0 1 85.3,69.4A65.9,65.9 0 0 0 58.4,45.3ZM21.4,-40.7A15.8,15.8 0 0 1 34.2,-17.1L21.4,-40.7ZM21.4,100.3A15.8,15.8 0 0 1 34.2,123.9L21.4,100.3ZM161.4,-40.7A15.8,15.8 0 0 1 174.2,-17.1L161.4,-40.7ZM161.4,100.3A15.8,15.8 0 0 1 174.2,123.9L161.4,100.3Z"/></g>
</pattern></defs>
<ellipse cx="340.75" cy="352" rx="278.75" ry="142.5" fill="url(#pt)" stroke="#7d8f9e" stroke-width="0.6"/>
<ellipse cx="631.5" cy="521" rx="279.5" ry="141.5" fill="url(#pt)" stroke="#4f74c8" stroke-width="1"/>
<path d="M352,594 L352,380 L911,380 L911,594" fill="none" stroke="#8d8f9c" stroke-width="1"/>
<g fill="#fff" stroke="#4f6fc0" stroke-width="1">
<rect x="350" y="378" width="4" height="4"/><rect x="629" y="378" width="4" height="4"/><rect x="909" y="378" width="4" height="4"/>
<rect x="350" y="519" width="4" height="4"/><rect x="909" y="519" width="4" height="4"/>
</g>
<path d="M913,521 L919,521" stroke="#4f6fc0" stroke-width="1"/><circle cx="922" cy="521" r="3" fill="none" stroke="#4f6fc0" stroke-width="1"/><circle cx="922" cy="521" r="1" fill="#4f6fc0"/>
</svg>
<div class="t fw" style="left:753px;top:638px;font-size:23px;color:rgba(175,175,175,0.75);-webkit-text-stroke:0.7px rgba(110,110,110,0.7);--w:233px">@aanavcreations</div>
<svg class="a" style="left:1024px;top:80px;" width="10" height="8" viewBox="0 0 10 8"><path d="M1,6 L5,2 L9,6" stroke="#bdbdbd" stroke-width="1.2" fill="none"/></svg>
<svg class="a" style="left:1024px;top:662px;" width="10" height="8" viewBox="0 0 10 8"><path d="M1,2 L5,6 L9,2" stroke="#bdbdbd" stroke-width="1.2" fill="none"/></svg>
<div class="a" style="left:62px;top:673px;width:1px;height:13px;background:#3a3a3a;"></div>
<div class="a" style="left:64px;top:673px;width:42px;height:13px;background:#4c4c4c;"></div>
<div class="t fw" style="left:67px;top:675.96px;font-size:9.5px;color:#d0d0d0;--w:22px;">100%</div>
<div class="a" style="left:107px;top:673px;width:14px;height:13px;background:#4a4a4a;"></div>
<svg class="a" style="left:108.5px;top:675.5px;" width="10" height="8" viewBox="0 0 10 8"><path d="M1,2.4 L5,5.6 L9,2.4" stroke="#d0d0d0" stroke-width="1.4" fill="none"/></svg>
<svg class="a" style="left:127px;top:675px;" width="26" height="9" viewBox="0 0 26 9"><path d="M1,1 L1,8" stroke="#6a6a6a" stroke-width="1.3"/><path d="M8,1 L3,4.5 L8,8Z M20,1 L15,4.5 L20,8Z" fill="#6a6a6a"/></svg>
<div class="a" style="left:156px;top:673px;width:34px;height:13px;background:#4c4c4c;"></div>
<div class="t" style="left:159.5px;top:676.46px;font-size:9.5px;color:#d0d0d0;">1</div>
<div class="a" style="left:190px;top:673px;width:15px;height:13px;background:#4a4a4a;"></div>
<svg class="a" style="left:192px;top:675.5px;" width="10" height="8" viewBox="0 0 10 8"><path d="M1,2.4 L5,5.6 L9,2.4" stroke="#d0d0d0" stroke-width="1.4" fill="none"/></svg>
<svg class="a" style="left:209px;top:675px;" width="26" height="9" viewBox="0 0 26 9"><path d="M2,1 L7,4.5 L2,8Z M14,1 L19,4.5 L14,8Z" fill="#6a6a6a"/><path d="M20,1 L20,8" stroke="#6a6a6a" stroke-width="1.3"/></svg>
<div class="t fw" style="left:312px;top:675.96px;font-size:9.5px;color:#c8c8c8;--w:22px;">Ellipse</div>
<svg class="a" style="left:411px;top:675px;" width="7" height="9" viewBox="0 0 7 9"><path d="M1,0.5 L6,4.5 L1,8.5Z" fill="#e0e0e0"/></svg>
<div class="a" style="left:421px;top:673px;width:1px;height:13px;background:#3c3c3c;"></div>
<svg class="a" style="left:425px;top:675px;" width="7" height="9" viewBox="0 0 7 9"><path d="M5,1 L2,4.5 L5,8" stroke="#c0c0c0" stroke-width="1.1" fill="none"/></svg>
<div class="a" style="left:705px;top:674px;width:21px;height:11px;background:#565656;border-radius:4px"></div>
<svg class="a" style="left:1012px;top:675px;" width="7" height="9" viewBox="0 0 7 9"><path d="M2,1 L5,4.5 L2,8" stroke="#c0c0c0" stroke-width="1.1" fill="none"/></svg>
<div class="a" style="left:1022px;top:672px;width:14px;height:14px;background:#4a4a4a;"></div>
<svg class="a" style="left:1057px;top:56px;" width="9" height="6" viewBox="0 0 9 6"><path d="M4,0.5 L0.5,3 L4,5.5Z M8.5,0.5 L5,3 L8.5,5.5Z" fill="#d0d0d0"/></svg>
<svg class="a" style="left:1267px;top:56px;" width="9" height="6" viewBox="0 0 9 6"><path d="M0.5,0.5 L4,3 L0.5,5.5Z M5,0.5 L8.5,3 L5,5.5Z" fill="#d0d0d0"/></svg>
<div class="a" style="left:1037px;top:65px;width:32px;height:56px;background:#505050;border:1px solid #444"></div>
<div class="a" style="left:1037px;top:123px;width:32px;height:30px;background:#505050;border:1px solid #444"></div>
<div class="a" style="left:1045px;top:68px;width:16px;height:3px;background:repeating-linear-gradient(90deg,#3a3a3a 0 2px,transparent 2px 3px)"></div>
<div class="a" style="left:1045px;top:126px;width:16px;height:3px;background:repeating-linear-gradient(90deg,#3a3a3a 0 2px,transparent 2px 3px)"></div>
<svg class="a" style="left:1045px;top:77px;" width="17" height="13" viewBox="0 0 17 13"><path d="M8,1 C14,1 17,5 15,8 C13,10 11,8 10,10 C9,12 6,12.5 3,11 C0,9 1,1 8,1Z" fill="#d8d8d8"/><circle cx="5" cy="9" r="1.3" fill="#505050"/><circle cx="8" cy="9.5" r="1.3" fill="#505050"/><circle cx="11" cy="4" r="1.3" fill="#505050"/><circle cx="13.5" cy="6" r="1.1" fill="#505050"/><circle cx="8" cy="4" r="1.2" fill="#505050"/></svg>
<svg class="a" style="left:1047px;top:100px" width="14" height="15"><defs><linearGradient id="dg" x1="0" y1="0" x2="1" y2="1"><stop offset="0" stop-color="#111"/><stop offset="1" stop-color="#eee"/></linearGradient></defs><path d="M1,1 Q13,3 13,14 L1,14Z" fill="url(#dg)" stroke="#ddd" stroke-width="1"/></svg>
<div class="a" style="left:1047px;top:138px;width:14px;height:2px;background:#d0d0d0;"></div>
<div class="a" style="left:1047px;top:142px;width:14px;height:2px;background:#d0d0d0;"></div>
<div class="a" style="left:1071px;top:64px;width:56px;height:23px;background:#535353;"></div>
<div class="a" style="left:1127px;top:64px;width:153px;height:23px;background:#464646;"></div>
<div class="t fw" style="left:1079px;top:71.03px;font-size:10px;color:#e6e6e6;--w:39.5px;font-weight:bold">Properties</div>
<div class="t fw" style="left:1079px;top:96.53px;font-size:10px;color:#d8d8d8;--w:23px;">Ellipse</div>
<div class="a" style="left:1071px;top:115px;width:209px;height:1px;background:#464646;"></div>
<div class="t fw" style="left:1079px;top:123.03px;font-size:10px;color:#d8d8d8;--w:37px;">Transform</div>
<svg class="a" style="left:1078px;top:151px;" width="18" height="18" viewBox="0 0 18 18"><rect x="0.5" y="0.5" width="5" height="5" fill="none" stroke="#dcdcdc" stroke-width="1"/><rect x="0.5" y="6.5" width="5" height="5" fill="none" stroke="#dcdcdc" stroke-width="1"/><rect x="0.5" y="12.5" width="5" height="5" fill="none" stroke="#dcdcdc" stroke-width="1"/><rect x="6.5" y="0.5" width="5" height="5" fill="none" stroke="#dcdcdc" stroke-width="1"/><rect x="6.5" y="6.5" width="5" height="5" fill="#f0f0f0" stroke="#dcdcdc" stroke-width="1"/><rect x="6.5" y="12.5" width="5" height="5" fill="none" stroke="#dcdcdc" stroke-width="1"/><rect x="12.5" y="0.5" width="5" height="5" fill="none" stroke="#dcdcdc" stroke-width="1"/><rect x="12.5" y="6.5" width="5" height="5" fill="none" stroke="#dcdcdc" stroke-width="1"/><rect x="12.5" y="12.5" width="5" height="5" fill="none" stroke="#dcdcdc" stroke-width="1"/></svg>
<div class="t" style="left:1107.5px;top:145.03px;font-size:10px;color:#d0d0d0;">X:</div>
<div class="a" style="left:1118.5px;top:141px;width:46px;height:16px;background:#474747;"></div>
<div class="t" style="left:1122.0px;top:144.76px;font-size:9.5px;color:#dadada;">684.5 px</div>
<div class="t" style="left:1177px;top:145.03px;font-size:10px;color:#d0d0d0;">W:</div>
<div class="a" style="left:1190px;top:141px;width:47px;height:16px;background:#474747;"></div>
<div class="t" style="left:1193.5px;top:144.76px;font-size:9.5px;color:#dadada;">428 px</div>
<svg class="a" style="left:1248px;top:153px;" width="13" height="15" viewBox="0 0 13 15"><path d="M3,6 L3,3 Q3,1 6,1 Q9,1 9,3 L9,5 M9,9 L9,12 Q9,14 6,14 Q3,14 3,12 L3,10" stroke="#d0d0d0" stroke-width="1.2" fill="none"/><path d="M1,2 L12,13" stroke="#d0d0d0" stroke-width="1.2"/></svg>
<div class="t" style="left:1107.5px;top:166.53px;font-size:10px;color:#d0d0d0;">Y:</div>
<div class="a" style="left:1118.5px;top:162.5px;width:46px;height:16px;background:#474747;"></div>
<div class="t" style="left:1122.0px;top:166.26px;font-size:9.5px;color:#dadada;">832.5 px</div>
<div class="t" style="left:1177px;top:166.53px;font-size:10px;color:#d0d0d0;">H:</div>
<div class="a" style="left:1190px;top:162.5px;width:47px;height:16px;background:#474747;"></div>
<div class="t" style="left:1193.5px;top:166.26px;font-size:9.5px;color:#dadada;">218 px</div>
<svg class="a" style="left:1102px;top:185px;" width="15" height="12" viewBox="0 0 15 12"><path d="M1,10.5 L13,10.5 L7,2 Z" fill="none" stroke="#d0d0d0" stroke-width="1.1"/><path d="M7,10.5 Q8,7 5,6" stroke="#d0d0d0" fill="none"/></svg>
<div class="t" style="left:1114px;top:184.53px;font-size:10px;color:#d0d0d0;">:</div>
<div class="a" style="left:1118px;top:184.5px;width:30px;height:16px;background:#474747;"></div>
<div class="t" style="left:1121.5px;top:188.26px;font-size:9.5px;color:#dadada;">0°</div>
<div class="a" style="left:1148px;top:184.5px;width:16px;height:16px;background:#474747;"></div>
<svg class="a" style="left:1151px;top:188.5px;" width="10" height="8" viewBox="0 0 10 8"><path d="M1,2.4 L5,5.6 L9,2.4" stroke="#d0d0d0" stroke-width="1.4" fill="none"/></svg>
<svg class="a" style="left:1195px;top:187px;" width="13" height="12" viewBox="0 0 13 12"><path d="M1,1 L5,6 L1,11Z M12,1 L8,6 L12,11Z" fill="none" stroke="#d0d0d0" stroke-width="1"/><path d="M6.5,0 L6.5,12" stroke="#d0d0d0" stroke-width="1"/></svg>
<svg class="a" style="left:1219px;top:186px;" width="12" height="14" viewBox="0 0 12 14"><path d="M1,1 L11,1 L6,5Z M1,13 L11,13 L6,9Z" fill="none" stroke="#d0d0d0" stroke-width="1"/><path d="M0,7 L12,7" stroke="#d0d0d0" stroke-width="1"/></svg>
<svg class="a" style="left:1256px;top:209px;" width="13" height="4" viewBox="0 0 13 4"><circle cx="2" cy="2" r="1.5" fill="#d8d8d8"/><circle cx="6.5" cy="2" r="1.5" fill="#d8d8d8"/><circle cx="11" cy="2" r="1.5" fill="#d8d8d8"/></svg>
<div class="a" style="left:1071px;top:222px;width:209px;height:1px;background:#464646;"></div>
<div class="t fw" style="left:1079px;top:232.03px;font-size:10px;color:#d8d8d8;--w:44px;">Appearance</div>
<svg class="a" style="left:1080px;top:252px" width="14" height="14"><g transform="scale(0.15)"><rect width="94" height="94" fill="url(#pt)"/></g><rect x="0.5" y="0.5" width="13" height="13" fill="none" stroke="#ccc"/></svg>
<div class="t" style="left:1104px;top:253.53px;font-size:10px;color:#d8d8d8;">Fill</div>
<svg class="a" style="left:1080px;top:276px" width="14" height="14"><rect width="14" height="14" fill="#dde6cc" stroke="#eee"/><rect x="3.5" y="3.5" width="7" height="7" fill="#444" stroke="#f2f2f2" stroke-width="1.5"/></svg>
<div class="t fw" style="left:1104px;top:278.54px;font-size:10px;color:#d8d8d8;--w:23px;">Stroke</div>
<div class="a" style="left:1104px;top:290px;width:23px;height:1px;background:repeating-linear-gradient(90deg,#bdbdbd 0 1px,transparent 1px 2px)"></div>
<div class="a" style="left:1140px;top:273.5px;width:13px;height:17.5px;background:#474747;"></div>
<svg class="a" style="left:1142px;top:275px;" width="9" height="14" viewBox="0 0 9 14"><path d="M1,4.5 L4.5,1.5 L8,4.5 M1,9.5 L4.5,12.5 L8,9.5" stroke="#d0d0d0" stroke-width="1.2" fill="none"/></svg>
<div class="a" style="left:1153.5px;top:273.5px;width:27.5px;height:17.5px;background:#474747;"></div>
<div class="t" style="left:1157px;top:278.76px;font-size:9.5px;color:#dadada;">1 pt</div>
<div class="a" style="left:1181px;top:273.5px;width:16px;height:17.5px;background:#474747;"></div>
<svg class="a" style="left:1184px;top:278px;" width="10" height="8" viewBox="0 0 10 8"><path d="M1,2.4 L5,5.6 L9,2.4" stroke="#d0d0d0" stroke-width="1.4" fill="none"/></svg>
<svg class="a" style="left:1080px;top:300px" width="14" height="14"><rect x="0.5" y="0.5" width="13" height="13" fill="#5e5e5e" stroke="#8a8a8a"/><path d="M2,2h2v2h-2zM6,2h2v2h-2zM10,2h2v2h-2zM4,4h2v2h-2zM8,4h2v2h-2zM2,6h2v2h-2zM6,6h2v2h-2zM10,6h2v2h-2zM4,8h2v2h-2zM8,8h2v2h-2zM2,10h2v2h-2zM6,10h2v2h-2zM10,10h2v2h-2z" fill="#6e6e6e"/></svg>
<div class="t fw" style="left:1104px;top:303.04px;font-size:10px;color:#d8d8d8;--w:28px;">Opacity</div>
<div class="a" style="left:1104px;top:314px;width:28px;height:1px;background:repeating-linear-gradient(90deg,#bdbdbd 0 1px,transparent 1px 2px)"></div>
<div class="a" style="left:1140px;top:299px;width:41px;height:15.5px;background:#474747;"></div>
<div class="t" style="left:1142.5px;top:302.26px;font-size:9.5px;color:#dadada;">100%</div>
<div class="a" style="left:1181px;top:299px;width:16px;height:15.5px;background:#474747;"></div>
<svg class="a" style="left:1186px;top:302px;" width="7" height="10" viewBox="0 0 7 10"><path d="M1.5,1 L5.5,5 L1.5,9" stroke="#d0d0d0" stroke-width="1.3" fill="none"/></svg>
<div class="t" style="left:1084px;top:326.19px;font-size:11px;color:#d0d0d0;font-family:"Liberation Serif",serif"><i>fx</i>.</div>
<svg class="a" style="left:1256px;top:348px;" width="13" height="4" viewBox="0 0 13 4"><circle cx="2" cy="2" r="1.5" fill="#d8d8d8"/><circle cx="6.5" cy="2" r="1.5" fill="#d8d8d8"/><circle cx="11" cy="2" r="1.5" fill="#d8d8d8"/></svg>
<div class="a" style="left:1071px;top:363px;width:209px;height:1px;background:#464646;"></div>
<div class="t fw" style="left:1079px;top:376.04px;font-size:10px;color:#d8d8d8;--w:49.5px;">Quick Actions</div>
<div class="a" style="left:1079px;top:394px;width:83.5px;height:17.5px;border:1px solid #6c6c6c;border-radius:2px;background:#535353"></div>
<div class="t fw" style="left:1100.25px;top:398.46px;font-size:9.5px;color:#dcdcdc;--w:41px;">Offset Path</div>
<div class="a" style="left:1171px;top:394px;width:83px;height:17.5px;border:1px solid #6c6c6c;border-radius:2px;background:#535353"></div>
<div class="t fw" style="left:1186.5px;top:398.46px;font-size:9.5px;color:#dcdcdc;--w:52px;">Expand Shape</div>
<div class="a" style="left:1079px;top:420px;width:83.5px;height:17px;border:1px solid #6c6c6c;border-radius:2px;background:#535353"></div>
<div class="t fw" style="left:1106.75px;top:423.96px;font-size:9.5px;color:#dcdcdc;--w:28px;">Arrange</div>
<div class="a" style="left:1171px;top:420px;width:83px;height:17px;border:1px solid #6c6c6c;border-radius:2px;background:#535353"></div>
<div class="t fw" style="left:1179.5px;top:423.96px;font-size:9.5px;color:#dcdcdc;--w:66px;">Align to Pixel Grid</div>
<div class="a" style="left:1079px;top:445.5px;width:175px;height:17px;border:1px solid #6c6c6c;border-radius:2px;background:#535353"></div>
<div class="t fw" style="left:1152.5px;top:449.46px;font-size:9.5px;color:#dcdcdc;--w:28px;">Recolor</div>
<div class="a" style="left:1079px;top:471.5px;width:157px;height:17px;border:1px solid #6c6c6c;border-radius:2px;background:#535353"></div>
<div class="t fw" style="left:1127.0px;top:475.46px;font-size:9.5px;color:#dcdcdc;--w:61px;">Start Global Edit</div>
<div class="a" style="left:1236px;top:471.5px;width:18px;height:17px;border:1px solid #6c6c6c;border-left:none;border-radius:0 2px 2px 0"></div>
<svg class="a" style="left:1240px;top:476px;" width="10" height="8" viewBox="0 0 10 8"><path d="M1,2.4 L5,5.6 L9,2.4" stroke="#d0d0d0" stroke-width="1.4" fill="none"/></svg>
<div class="a" style="left:870px;top:144px;width:201px;height:255px;background:#535353;border:1px solid #383838;border-radius:4px 4px 0 0;overflow:hidden"></div>
<div class="a" style="left:871px;top:145px;width:199px;height:10.5px;background:#3c3c3c;border-radius:3px 3px 0 0"></div>
<svg class="a" style="left:1046px;top:147.5px;" width="8" height="5" viewBox="0 0 8 5"><path d="M3.5,0.5 L0.5,2.5 L3.5,4.5Z M7.5,0.5 L4.5,2.5 L7.5,4.5Z" fill="#cfcfcf"/></svg>
<svg class="a" style="left:1060.5px;top:146px;" width="8" height="8" viewBox="0 0 8 8"><path d="M1,1 L7,7 M7,1 L1,7" stroke="#d8d8d8" stroke-width="1.5"/></svg>
<div class="a" style="left:871px;top:155.5px;width:199px;height:22px;background:#434343;"></div>
<div class="a" style="left:871px;top:155.5px;width:45px;height:22px;background:#535353;"></div>
<div class="a" style="left:916px;top:155.5px;width:47px;height:22px;background:#484848;"></div>
<div class="t fw" style="left:878.5px;top:161.53px;font-size:10px;color:#e8e8e8;--w:30px;font-weight:bold">Brushes</div>
<div class="t fw" style="left:923px;top:161.53px;font-size:10px;color:#bdbdbd;--w:31px;">Symbols</div>
<svg class="a" style="left:1057px;top:163px;" width="11" height="9" viewBox="0 0 11 9"><rect y="0" width="11" height="1.4" fill="#c8c8c8"/><rect y="3.8" width="11" height="1.4" fill="#c8c8c8"/><rect y="7.6" width="11" height="1.4" fill="#c8c8c8"/></svg>
<div class="a" style="left:876px;top:184px;width:26px;height:4.5px;background:#ececec;"></div>
<div class="a" style="left:903px;top:184px;width:26px;height:4.5px;background:#ececec;"></div>
<div class="a" style="left:931px;top:184px;width:26px;height:4.5px;background:#ececec;"></div>
<div class="a" style="left:958px;top:184px;width:26px;height:4.5px;background:#ececec;"></div>
<div class="a" style="left:876px;top:189px;width:178px;height:192px;background:#e9e9e9;"></div>
<div class="a" style="left:876px;top:216.5px;width:178px;height:1.5px;background:#9a9a9a;"></div>
<div class="a" style="left:876px;top:244px;width:178px;height:1.5px;background:#9a9a9a;"></div>
<div class="a" style="left:876px;top:271px;width:178px;height:1.5px;background:#9a9a9a;"></div>
<div class="a" style="left:876px;top:300px;width:178px;height:1.5px;background:#9a9a9a;"></div>
<div class="a" style="left:876px;top:325.5px;width:178px;height:1.5px;background:#9a9a9a;"></div>
<div class="a" style="left:876px;top:353px;width:178px;height:1.5px;background:#9a9a9a;"></div>
<div class="a" style="left:1014px;top:202px;width:13px;height:2.5px;background:#111;"></div>
<div class="t fw" style="left:1031px;top:198.96px;font-size:9.5px;color:#222;--w:19px;">Basic</div>
<div class="a" style="left:1014px;top:229.5px;width:38px;height:1.5px;background:repeating-linear-gradient(90deg,#333 0 2px,#888 2px 3px)"></div>
<svg class="a" style="left:1014px;top:248px;" width="38" height="22" viewBox="0 0 38 22"><path d="M1.5,6.5 L36,2 L26,20 Z M7,7.5 L30,5 L24,15 Z" fill="#111" fill-rule="evenodd"/></svg>
<div class="t fw" style="left:1015px;top:271.5px;font-size:29px;font-weight:bold;color:#111;--w:35px">ons</div>
<div class="a" style="left:1014px;top:302px;width:35px;height:5px;background:#e02020;"></div>
<div class="a" style="left:1014px;top:307px;width:35px;height:5px;background:#f08a1a;"></div>
<div class="a" style="left:1014px;top:312px;width:35px;height:5px;background:#e8e020;"></div>
<div class="a" style="left:1014px;top:317px;width:35px;height:5px;background:#38a838;"></div>
<svg class="a" style="left:1014px;top:334px;" width="28" height="14" viewBox="0 0 28 14"><path d="M1,12 Q10,7 26,5" stroke="#555" stroke-width="2" fill="none"/></svg>
<div class="a" style="left:1012px;top:361px;width:24px;height:12px;border-radius:50%;background:radial-gradient(ellipse,#888 0%,rgba(150,150,150,0.5) 50%,rgba(230,230,230,0) 75%)"></div>
<div class="a" style="left:1055px;top:184px;width:10px;height:197px;background:#4a4a4a;"></div>
<div class="a" style="left:1056px;top:210px;width:8px;height:160px;background:#555555;border-radius:3px"></div>
<svg class="a" style="left:1055px;top:185px;" width="10" height="8" viewBox="0 0 10 8"><path d="M1.5,6 L5,2.5 L8.5,6" stroke="#bdbdbd" stroke-width="1.1" fill="none"/></svg>
<svg class="a" style="left:1055px;top:372px;" width="10" height="8" viewBox="0 0 10 8"><path d="M1.5,2 L5,5.5 L8.5,2" stroke="#bdbdbd" stroke-width="1.1" fill="none"/></svg>
<svg class="a" style="left:1015px;top:384px;" width="13" height="13" viewBox="0 0 13 13"><path d="M1,1 L12,1 L12,12 L5,12 L1,8 Z" fill="#c8c8c8"/><path d="M1,8 L5,8 L5,12" fill="#888" stroke="#535353" stroke-width="1"/></svg>
<svg class="a" style="left:1038px;top:383px;" width="11" height="14" viewBox="0 0 11 14"><rect x="1.5" y="3.5" width="8" height="10" fill="none" stroke="#6a6a6a" stroke-width="1.2"/><rect x="0" y="1.5" width="11" height="1.5" fill="#6a6a6a"/><rect x="3.5" y="0" width="4" height="1.5" fill="#6a6a6a"/></svg>
<div class="a" style="left:870px;top:398px;width:201px;height:1px;background:#383838;"></div>
<div class="a" style="left:765px;top:198px;width:250px;height:325px;background:#535353;border:1px solid #383838;border-radius:4px 4px 0 0"></div>
<div class="a" style="left:766px;top:199px;width:248px;height:9.6px;background:#3c3c3c;border-radius:3px 3px 0 0"></div>
<svg class="a" style="left:990px;top:201.0px;" width="8" height="5" viewBox="0 0 8 5"><path d="M3.5,0.5 L0.5,2.5 L3.5,4.5Z M7.5,0.5 L4.5,2.5 L7.5,4.5Z" fill="#cfcfcf"/></svg>
<svg class="a" style="left:1004.5px;top:199.5px;" width="8" height="8" viewBox="0 0 8 8"><path d="M1,1 L7,7 M7,1 L1,7" stroke="#d8d8d8" stroke-width="1.5"/></svg>
<div class="a" style="left:766px;top:208.6px;width:248px;height:22.4px;background:#434343;"></div>
<div class="a" style="left:766px;top:208.6px;width:51px;height:22.4px;background:#535353;"></div>
<div class="t fw" style="left:773px;top:216.03px;font-size:10px;color:#e8e8e8;--w:35px;font-weight:bold">Swatches</div>
<svg class="a" style="left:1000px;top:216px;" width="11" height="9" viewBox="0 0 11 9"><rect y="0" width="11" height="1.4" fill="#c8c8c8"/><rect y="3.8" width="11" height="1.4" fill="#c8c8c8"/><rect y="7.6" width="11" height="1.4" fill="#c8c8c8"/></svg>
<svg class="a" style="left:770px;top:237px" width="26" height="26"><g transform="scale(0.16)"><rect width="100" height="100" fill="url(#pt)"/></g><rect x="0.5" y="0.5" width="15" height="15" fill="none" stroke="#ddd"/><rect x="8.5" y="8.5" width="16" height="16" fill="#dfe6cc" stroke="#f2f2f2"/><circle cx="11" cy="11" r="2.5" fill="#b9d3e6"/><circle cx="22" cy="22" r="2.5" fill="#c6dba4"/><rect x="13" y="13" width="7" height="7" fill="#444" stroke="#f0f0f0" stroke-width="1.5"/></svg>
<div class="a" style="left:969px;top:236px;width:19px;height:20px;background:#4a4a4a;"></div>
<svg class="a" style="left:973px;top:240px;" width="11" height="11" viewBox="0 0 11 11"><rect y="0" width="11" height="1.6" fill="#ddd"/><rect y="3.1" width="11" height="1.6" fill="#ddd"/><rect y="6.2" width="11" height="1.6" fill="#ddd"/><rect y="9.3" width="11" height="1.6" fill="#ddd"/></svg>
<div class="a" style="left:990px;top:236px;width:19px;height:20px;background:#2c2c2c;"></div>
<svg class="a" style="left:994px;top:240px;" width="11" height="11" viewBox="0 0 11 11"><rect x="0.0" y="0.0" width="3" height="3" fill="#f4f4f4"/><rect x="0.0" y="3.8" width="3" height="3" fill="#f4f4f4"/><rect x="0.0" y="7.6" width="3" height="3" fill="#f4f4f4"/><rect x="3.8" y="0.0" width="3" height="3" fill="#f4f4f4"/><rect x="3.8" y="3.8" width="3" height="3" fill="#f4f4f4"/><rect x="3.8" y="7.6" width="3" height="3" fill="#f4f4f4"/><rect x="7.6" y="0.0" width="3" height="3" fill="#f4f4f4"/><rect x="7.6" y="3.8" width="3" height="3" fill="#f4f4f4"/><rect x="7.6" y="7.6" width="3" height="3" fill="#f4f4f4"/></svg>
<div class="a" style="left:768px;top:264px;width:243px;height:117px;background:#4f4f4f;"></div>
<svg class="a" style="left:770px;top:266px;" width="11" height="11.5" viewBox="0 0 11 11.5"><rect width="11" height="11.5" fill="#fff"/><path d="M11,0 L0,11.5" stroke="#d02020" stroke-width="2"/></svg>
<svg class="a" style="left:781.7px;top:266px;" width="11" height="11.5" viewBox="0 0 11 11.5"><rect width="11" height="11.5" fill="#f4f4f4"/><circle cx="5.5" cy="5.75" r="3" fill="none" stroke="#333" stroke-width="0.9"/><path d="M5.5,1 L5.5,10.5 M1,5.75 L10,5.75" stroke="#333" stroke-width="0.9"/></svg>
<div class="a" style="left:793.4000000000001px;top:266px;width:10.8px;height:11.5px;background:#ffffff;"></div>
<div class="a" style="left:805.1000000000001px;top:266px;width:10.8px;height:11.5px;background:#000000;"></div>
<div class="a" style="left:816.8000000000002px;top:266px;width:10.8px;height:11.5px;background:#ff0000;"></div>
<div class="a" style="left:828.5000000000002px;top:266px;width:10.8px;height:11.5px;background:#ffff00;"></div>
<div class="a" style="left:840.2000000000003px;top:266px;width:10.8px;height:11.5px;background:#00ff00;"></div>
<div class="a" style="left:851.9000000000003px;top:266px;width:10.8px;height:11.5px;background:#00ffff;"></div>
<div class="a" style="left:863.6000000000004px;top:266px;width:10.8px;height:11.5px;background:#0000ff;"></div>
<div class="a" style="left:875.3000000000004px;top:266px;width:10.8px;height:11.5px;background:#ff00ff;"></div>
<div class="a" style="left:887.0000000000005px;top:266px;width:10.8px;height:11.5px;background:#c1272d;"></div>
<div class="a" style="left:898.7000000000005px;top:266px;width:10.8px;height:11.5px;background:#ed1c24;"></div>
<div class="a" style="left:910.4000000000005px;top:266px;width:10.8px;height:11.5px;background:#f15a24;"></div>
<div class="a" style="left:922.1000000000006px;top:266px;width:10.8px;height:11.5px;background:#f7931e;"></div>
<div class="a" style="left:933.8000000000006px;top:266px;width:10.8px;height:11.5px;background:#fbb03b;"></div>
<div class="a" style="left:945.5000000000007px;top:266px;width:10.8px;height:11.5px;background:#fcee21;"></div>
<div class="a" style="left:957.2000000000007px;top:266px;width:10.8px;height:11.5px;background:#d9e021;"></div>
<div class="a" style="left:968.9000000000008px;top:266px;width:10.8px;height:11.5px;background:#8cc63f;"></div>
<div class="a" style="left:980.6000000000008px;top:266px;width:10.8px;height:11.5px;background:#39b54a;"></div>
<div class="a" style="left:770px;top:278.3px;width:10.8px;height:11.5px;background:#009245;"></div>
<div class="a" style="left:781.7px;top:278.3px;width:10.8px;height:11.5px;background:#006837;"></div>
<div class="a" style="left:793.4000000000001px;top:278.3px;width:10.8px;height:11.5px;background:#22b573;"></div>
<div class="a" style="left:805.1000000000001px;top:278.3px;width:10.8px;height:11.5px;background:#00a99d;"></div>
<div class="a" style="left:816.8000000000002px;top:278.3px;width:10.8px;height:11.5px;background:#29abe2;"></div>
<div class="a" style="left:828.5000000000002px;top:278.3px;width:10.8px;height:11.5px;background:#0071bc;"></div>
<div class="a" style="left:840.2000000000003px;top:278.3px;width:10.8px;height:11.5px;background:#2e3192;"></div>
<div class="a" style="left:851.9000000000003px;top:278.3px;width:10.8px;height:11.5px;background:#1b1464;"></div>
<div class="a" style="left:863.6000000000004px;top:278.3px;width:10.8px;height:11.5px;background:#662d91;"></div>
<div class="a" style="left:875.3000000000004px;top:278.3px;width:10.8px;height:11.5px;background:#93278f;"></div>
<div class="a" style="left:887.0000000000005px;top:278.3px;width:10.8px;height:11.5px;background:#9e005d;"></div>
<div class="a" style="left:898.7000000000005px;top:278.3px;width:10.8px;height:11.5px;background:#d4145a;"></div>
<div class="a" style="left:910.4000000000005px;top:278.3px;width:10.8px;height:11.5px;background:#ed1e79;"></div>
<div class="a" style="left:922.1000000000006px;top:278.3px;width:10.8px;height:11.5px;background:#c7b299;"></div>
<div class="a" style="left:933.8000000000006px;top:278.3px;width:10.8px;height:11.5px;background:#998675;"></div>
<div class="a" style="left:945.5000000000007px;top:278.3px;width:10.8px;height:11.5px;background:#736357;"></div>
<div class="a" style="left:957.2000000000007px;top:278.3px;width:10.8px;height:11.5px;background:#534741;"></div>
<div class="a" style="left:968.9000000000008px;top:278.3px;width:10.8px;height:11.5px;background:#c69c6d;"></div>
<div class="a" style="left:980.6000000000008px;top:278.3px;width:10.8px;height:11.5px;background:#a67c52;"></div>
<div class="a" style="left:770px;top:290.6px;width:10.8px;height:11.5px;background:#8c6239;"></div>
<div class="a" style="left:781.7px;top:290.6px;width:10.8px;height:11.5px;background:#754c24;"></div>
<div class="a" style="left:793.4000000000001px;top:290.6px;width:10.8px;height:11.5px;background:#603813;"></div>
<div class="a" style="left:805.1000000000001px;top:290.6px;width:10.8px;height:11.5px;background:#42210b;"></div>
<div class="a" style="left:816.8000000000002px;top:290.6px;width:11px;height:11.5px;background:linear-gradient(90deg,#fff,#000);"></div>
<div class="a" style="left:828.5000000000002px;top:290.6px;width:11px;height:11.5px;background:linear-gradient(90deg,#fff,#0071bc);"></div>
<div class="a" style="left:840.2000000000003px;top:290.6px;width:11px;height:11.5px;background:repeating-linear-gradient(45deg,#f4a6c8 0 2px,#fbe0ec 2px 3px);"></div>
<div class="a" style="left:851.9000000000003px;top:290.6px;width:11px;height:11.5px;background:radial-gradient(circle,#ffe7a0 0,#f7931e 60%);"></div>
<div class="a" style="left:863.6000000000004px;top:290.6px;width:11px;height:11.5px;background:repeating-linear-gradient(45deg,#eee 0 1px,#ccc 1px 2px);"></div>
<div class="a" style="left:875.3000000000004px;top:290.6px;width:11px;height:11.5px;background:repeating-linear-gradient(60deg,#1e5aa8 0 2px,#d8e8f5 2px 3px,#3f80c5 3px 5px);"></div>
<div class="a" style="left:887.0000000000005px;top:290.6px;width:11px;height:11.5px;background:#cfdcc0;border:2px solid #eee"></div>
<div class="a" style="left:898.7000000000005px;top:290.6px;width:11px;height:11.5px;background:repeating-linear-gradient(60deg,#1e5aa8 0 2px,#d8e8f5 2px 3px,#3f80c5 3px 5px);"></div>
<svg class="a" style="left:770px;top:303.5px;" width="11" height="11.5" viewBox="0 0 11 11.5"><path d="M0.5,3.4499999999999997 L4,3.4499999999999997 L5,1.7249999999999999 L10.5,1.7249999999999999 L10.5,10.5 L0.5,10.5Z" fill="#c8c8c8" stroke="#aaa" stroke-width="0.6"/></svg>
<div class="a" style="left:781.7px;top:303.5px;width:10.8px;height:11.5px;background:#000000;"></div>
<div class="a" style="left:793.4000000000001px;top:303.5px;width:10.8px;height:11.5px;background:#1a1a1a;"></div>
<div class="a" style="left:805.1000000000001px;top:303.5px;width:10.8px;height:11.5px;background:#333333;"></div>
<div class="a" style="left:816.8000000000002px;top:303.5px;width:10.8px;height:11.5px;background:#4d4d4d;"></div>
<div class="a" style="left:828.5000000000002px;top:303.5px;width:10.8px;height:11.5px;background:#666666;"></div>
<div class="a" style="left:840.2000000000003px;top:303.5px;width:10.8px;height:11.5px;background:#808080;"></div>
<div class="a" style="left:851.9000000000003px;top:303.5px;width:10.8px;height:11.5px;background:#999999;"></div>
<div class="a" style="left:863.6000000000004px;top:303.5px;width:10.8px;height:11.5px;background:#b3b3b3;"></div>
<div class="a" style="left:875.3000000000004px;top:303.5px;width:10.8px;height:11.5px;background:#cccccc;"></div>
<div class="a" style="left:887.0000000000005px;top:303.5px;width:10.8px;height:11.5px;background:#e6e6e6;"></div>
<div class="a" style="left:898.7000000000005px;top:303.5px;width:10.8px;height:11.5px;background:#f2f2f2;"></div>
<svg class="a" style="left:770px;top:316.5px;" width="11" height="11.5" viewBox="0 0 11 11.5"><path d="M0.5,3.4499999999999997 L4,3.4499999999999997 L5,1.7249999999999999 L10.5,1.7249999999999999 L10.5,10.5 L0.5,10.5Z" fill="#c8c8c8" stroke="#aaa" stroke-width="0.6"/></svg>
<div class="a" style="left:781.7px;top:316.5px;width:10.8px;height:11.5px;background:#29abe2;"></div>
<div class="a" style="left:793.4000000000001px;top:316.5px;width:10.8px;height:11.5px;background:#8cc63f;"></div>
<div class="a" style="left:805.1000000000001px;top:316.5px;width:10.8px;height:11.5px;background:#f7931e;"></div>
<div class="a" style="left:816.8000000000002px;top:316.5px;width:10.8px;height:11.5px;background:#ed1c24;"></div>
<div class="a" style="left:828.5000000000002px;top:316.5px;width:10.8px;height:11.5px;background:#ff7bac;"></div>
<div class="a" style="left:840.2000000000003px;top:316.5px;width:10.8px;height:11.5px;background:#cfdde6;"></div>
<svg class="a" style="left:773px;top:384px;" width="13" height="12" viewBox="0 0 13 12"><path d="M1,11 L1,1 M4,11 L4,1 M7,11 L9,1" stroke="#c8c8c8" stroke-width="1.6"/><circle cx="11.5" cy="10.5" r="1" fill="#c8c8c8"/></svg>
<svg class="a" style="left:796px;top:384px;" width="12" height="12" viewBox="0 0 12 12"><circle cx="7" cy="6" r="3.5" fill="none" stroke="#c8c8c8" stroke-width="1.2"/><path d="M1,11 L4,8 M1,1 L4,4" stroke="#c8c8c8" stroke-width="1.2"/></svg>
<svg class="a" style="left:816px;top:385px;" width="15" height="10" viewBox="0 0 15 10"><path d="M3,9 Q0,9 1,6 Q1,4 4,4 Q5,0 9,1 Q12,2 12,5 Q15,5 14,8 Q14,9 12,9Z" fill="#6a6a6a"/></svg>
<svg class="a" style="left:892px;top:384px;" width="14" height="12" viewBox="0 0 14 12"><rect x="0.5" y="0.5" width="11" height="10" fill="none" stroke="#c8c8c8" stroke-width="1"/><path d="M0.5,4 h11 M0.5,7 h11 M4,0.5 v10 M8,0.5 v10" stroke="#c8c8c8" stroke-width="1"/><circle cx="13" cy="11" r="0.8" fill="#c8c8c8"/></svg>
<svg class="a" style="left:915px;top:384px;" width="13" height="12" viewBox="0 0 13 12"><rect x="0.5" y="0.5" width="12" height="11" fill="none" stroke="#c8c8c8" stroke-width="1.1"/><path d="M0.5,3.5 h12" stroke="#c8c8c8" stroke-width="1.1"/><rect x="3" y="5.5" width="7" height="4" fill="#c8c8c8"/></svg>
<svg class="a" style="left:936px;top:384px;" width="14" height="12" viewBox="0 0 14 12"><path d="M0.5,2 L5,2 L6,3.5 L13.5,3.5 L13.5,11.5 L0.5,11.5Z" fill="#c8c8c8"/></svg>
<svg class="a" style="left:959px;top:384px;" width="13" height="12" viewBox="0 0 13 12"><path d="M1,1 L12,1 L12,11 L5,11 L1,7 Z" fill="#c8c8c8"/><path d="M1,7 L5,7 L5,11" fill="#888" stroke="#535353" stroke-width="1"/></svg>
<svg class="a" style="left:980px;top:383px;" width="11" height="14" viewBox="0 0 11 14"><rect x="1.5" y="3.5" width="8" height="10" fill="none" stroke="#c8c8c8" stroke-width="1.2"/><rect x="0" y="1.5" width="11" height="1.5" fill="#c8c8c8"/><rect x="3.5" y="0" width="4" height="1.5" fill="#c8c8c8"/><path d="M4,5.5v6M7,5.5v6" stroke="#c8c8c8"/></svg>
<div class="a" style="left:766px;top:398px;width:248px;height:2px;background:#3c3c3c;"></div>
<div class="a" style="left:766px;top:400px;width:248px;height:22.5px;background:#434343;"></div>
<div class="a" style="left:766px;top:400px;width:34px;height:22.5px;background:#484848;"></div>
<div class="a" style="left:800px;top:400px;width:33px;height:22.5px;background:#484848;"></div>
<div class="a" style="left:833px;top:400px;width:81px;height:22.5px;background:#535353;"></div>
<div class="a" style="left:914px;top:400px;width:32px;height:22.5px;background:#484848;"></div>
<div class="a" style="left:946px;top:400px;width:36px;height:22.5px;background:#484848;"></div>
<div class="t fw" style="left:773px;top:407.04px;font-size:10px;color:#bdbdbd;--w:26px;">Ancien</div>
<div class="t fw" style="left:807px;top:407.04px;font-size:10px;color:#bdbdbd;--w:25px;">Celebr</div>
<div class="t fw" style="left:840px;top:407.04px;font-size:10px;color:#e8e8e8;--w:63.5px;font-weight:bold">Art &amp; Illustration</div>
<div class="t fw" style="left:922px;top:407.04px;font-size:10px;color:#bdbdbd;--w:23px;">Beach</div>
<div class="t fw" style="left:954px;top:407.04px;font-size:10px;color:#bdbdbd;--w:28px;">Flowers</div>
<svg class="a" style="left:1000px;top:407.5px;" width="11" height="9" viewBox="0 0 11 9"><rect y="0" width="11" height="1.4" fill="#c8c8c8"/><rect y="3.8" width="11" height="1.4" fill="#c8c8c8"/><rect y="7.6" width="11" height="1.4" fill="#c8c8c8"/></svg>
<div class="a" style="left:770px;top:428.5px;width:239px;height:16px;background:#474747;border-radius:2px"></div>
<svg class="a" style="left:773px;top:431px;" width="11" height="11" viewBox="0 0 11 11"><circle cx="6.5" cy="4.5" r="3.5" fill="none" stroke="#c8c8c8" stroke-width="1.2"/><path d="M4,7 L1,10" stroke="#c8c8c8" stroke-width="1.5"/></svg>
<div class="a" style="left:768px;top:447px;width:243px;height:50px;background:#4f4f4f;"></div>
<div class="a" style="left:770px;top:449.5px;width:10.8px;height:8px;background:#22b573;"></div>
<div class="a" style="left:781.7px;top:449.5px;width:10.8px;height:8px;background:#00a99d;"></div>
<div class="a" style="left:793.4000000000001px;top:449.5px;width:10.8px;height:8px;background:#29abe2;"></div>
<div class="a" style="left:805.1000000000001px;top:449.5px;width:10.8px;height:8px;background:#0071bc;"></div>
<div class="a" style="left:816.8000000000002px;top:449.5px;width:10.8px;height:8px;background:#2e3192;"></div>
<div class="a" style="left:828.5000000000002px;top:449.5px;width:10.8px;height:8px;background:#1b1464;"></div>
<div class="a" style="left:840.2000000000003px;top:449.5px;width:10.8px;height:8px;background:#662d91;"></div>
<div class="a" style="left:851.9000000000003px;top:449.5px;width:10.8px;height:8px;background:#93278f;"></div>
<div class="a" style="left:863.6000000000004px;top:449.5px;width:10.8px;height:8px;background:#9e005d;"></div>
<div class="a" style="left:875.3000000000004px;top:449.5px;width:10.8px;height:8px;background:#d4145a;"></div>
<div class="a" style="left:887.0000000000005px;top:449.5px;width:10.8px;height:8px;background:#ed1e79;"></div>
<div class="a" style="left:898.7000000000005px;top:449.5px;width:10.8px;height:8px;background:#c7b299;"></div>
<div class="a" style="left:910.4000000000005px;top:449.5px;width:10.8px;height:8px;background:#998675;"></div>
<div class="a" style="left:922.1000000000006px;top:449.5px;width:10.8px;height:8px;background:#736357;"></div>
<div class="a" style="left:933.8000000000006px;top:449.5px;width:10.8px;height:8px;background:#534741;"></div>
<div class="a" style="left:945.5000000000007px;top:449.5px;width:10.8px;height:8px;background:#c69c6d;"></div>
<div class="a" style="left:957.2000000000007px;top:449.5px;width:10.8px;height:8px;background:#a67c52;"></div>
<div class="a" style="left:968.9000000000008px;top:449.5px;width:10.8px;height:8px;background:#8c6239;"></div>
<div class="a" style="left:980.6000000000008px;top:449.5px;width:10.8px;height:8px;background:#754c24;"></div>
<div class="a" style="left:770px;top:458.5px;width:10.8px;height:11px;background:#603813;"></div>
<div class="a" style="left:781.7px;top:458.5px;width:10.8px;height:11px;background:#42210b;"></div>
<div class="a" style="left:793.4000000000001px;top:458.5px;width:11px;height:11px;background:linear-gradient(90deg,#fff,#000);"></div>
<div class="a" style="left:805.1000000000001px;top:458.5px;width:11px;height:11px;background:linear-gradient(90deg,#fbd000,#f15a24);"></div>
<div class="a" style="left:816.8000000000002px;top:458.5px;width:11px;height:11px;background:repeating-linear-gradient(45deg,#7fd7e8 0 2px,#d8f3f8 2px 3px);"></div>
<div class="a" style="left:828.5000000000002px;top:458.5px;width:11px;height:11px;background:repeating-linear-gradient(60deg,#1e5aa8 0 2px,#d8e8f5 2px 3px,#3f80c5 3px 5px);outline:1px solid #ddd"></div>
<svg class="a" style="left:770px;top:471.5px;" width="11" height="10.5" viewBox="0 0 11 10.5"><path d="M0.5,3.15 L4,3.15 L5,1.575 L10.5,1.575 L10.5,9.5 L0.5,9.5Z" fill="#c8c8c8" stroke="#aaa" stroke-width="0.6"/></svg>
<div class="a" style="left:781.7px;top:471.5px;width:10.8px;height:10.5px;background:#4fc4cf;"></div>
<div class="a" style="left:793.4000000000001px;top:471.5px;width:10.8px;height:10.5px;background:#8c8fd6;"></div>
<div class="a" style="left:805.1000000000001px;top:471.5px;width:10.8px;height:10.5px;background:#c9a3e0;"></div>
<svg class="a" style="left:770px;top:484.5px;" width="11" height="11" viewBox="0 0 11 11"><path d="M0.5,3.3 L4,3.3 L5,1.65 L10.5,1.65 L10.5,10 L0.5,10Z" fill="#c8c8c8" stroke="#aaa" stroke-width="0.6"/></svg>
<div class="a" style="left:781.7px;top:484.5px;width:10.8px;height:11px;background:#000000;"></div>
<div class="a" style="left:793.4000000000001px;top:484.5px;width:10.8px;height:11px;background:#1a1a1a;"></div>
<div class="a" style="left:805.1000000000001px;top:484.5px;width:10.8px;height:11px;background:#333333;"></div>
<div class="a" style="left:816.8000000000002px;top:484.5px;width:10.8px;height:11px;background:#4d4d4d;"></div>
<div class="a" style="left:828.5000000000002px;top:484.5px;width:10.8px;height:11px;background:#666666;"></div>
<div class="a" style="left:840.2000000000003px;top:484.5px;width:10.8px;height:11px;background:#808080;"></div>
<div class="a" style="left:851.9000000000003px;top:484.5px;width:10.8px;height:11px;background:#999999;"></div>
<div class="a" style="left:863.6000000000004px;top:484.5px;width:10.8px;height:11px;background:#b3b3b3;"></div>
<div class="a" style="left:875.3000000000004px;top:484.5px;width:10.8px;height:11px;background:#cccccc;"></div>
<div class="a" style="left:887.0000000000005px;top:484.5px;width:10.8px;height:11px;background:#e6e6e6;"></div>
<div class="a" style="left:898.7000000000005px;top:484.5px;width:10.8px;height:11px;background:#f2f2f2;"></div>
<div class="a" style="left:998px;top:448px;width:11px;height:49px;background:#4a4a4a;"></div>
<svg class="a" style="left:999px;top:450px;" width="9" height="7" viewBox="0 0 9 7"><path d="M1.5,5.5 L4.5,2 L7.5,5.5" stroke="#bdbdbd" stroke-width="1.1" fill="none"/></svg>
<svg class="a" style="left:999px;top:489px;" width="9" height="7" viewBox="0 0 9 7"><path d="M1.5,1.5 L4.5,5 L7.5,1.5" stroke="#bdbdbd" stroke-width="1.1" fill="none"/></svg>
<svg class="a" style="left:773px;top:502px;" width="13" height="12" viewBox="0 0 13 12"><path d="M1,11 L1,1 M4,11 L4,1 M7,11 L9,1" stroke="#c8c8c8" stroke-width="1.6"/><circle cx="11.5" cy="10.5" r="1" fill="#c8c8c8"/></svg>
<svg class="a" style="left:798px;top:502px;" width="8" height="11" viewBox="0 0 8 11"><path d="M7,1 L1,5.5 L7,10Z" fill="#c8c8c8"/></svg>
<svg class="a" style="left:820px;top:502px;" width="8" height="11" viewBox="0 0 8 11"><path d="M1,1 L7,5.5 L1,10Z" fill="#c8c8c8"/></svg>
<svg class="a" style="left:974px;top:501px;" width="13" height="13" viewBox="0 0 13 13"><path d="M2,12 L11,3 M3,3 L11,11" stroke="#c8c8c8" stroke-width="1.6"/><circle cx="11" cy="2.5" r="2" fill="#c8c8c8"/></svg>
<div class="a" style="left:766px;top:519px;width:248px;height:4px;background:#474747;"></div>
<div class="a" style="left:880px;top:519px;width:18px;height:2px;background:repeating-linear-gradient(90deg,#333 0 2px,transparent 2px 3px)"></div>
<div class="a" style="left:1130px;top:594.5px;width:125px;height:97.5px;background:#1c1c1c;"></div>
<div class="t fw" style="left:1137px;top:618.69px;font-size:17.5px;color:#e8e8e8;--w:82px;font-weight:bold">Left Click</div>
<div class="t fw" style="left:1137px;top:642.96px;font-size:9.5px;color:#f0f0f0;--w:43px;font-weight:bold">NumLock</div>
<div class="t fw" style="left:1137px;top:658.03px;font-size:10px;color:#e0e0e0;--w:40px;">Left Click</div>
<div class="t fw" style="left:1137px;top:672.96px;font-size:9.5px;color:#d0d0d0;--w:91px;font-style:italic">AANAVCREATIONS</div>
<div class="a" style="left:1130px;top:687px;width:125px;height:5px;background:#505050;"></div>
<svg class="a" style="left:1212px;top:0px" width="66" height="88" viewBox="0 0 66 88">
<defs><linearGradient id="lg" x1="0" y1="0" x2="0" y2="1"><stop offset="0" stop-color="#2aa0ec"/><stop offset="1" stop-color="#1a5fd0"/></linearGradient></defs>
<path d="M27,57 C16,55 8,48 9,38 C10,26 28,14 31.75,7 C36,14 55,26 55.5,38 C56,48 48,55 37,57" fill="none" stroke="#1d8fe0" stroke-width="4.3" stroke-linecap="round" stroke-linejoin="round"/>
<path d="M11,31 C18,27 26,25 34,27 C45,30 47,42 39,46 C34,48 30,46 29,43" fill="none" stroke="#1d8fe0" stroke-width="5"/>
<ellipse cx="32" cy="71" rx="24" ry="10" fill="url(#lg)"/>
<ellipse cx="32" cy="69.5" rx="15" ry="5" fill="#24477a"/>
<path d="M22,70 Q25,66 29,67 Q32,63 36,66 Q40,65 42,70 Z" fill="#2f7fd8"/>
</svg>
<div class="t fw" style="left:-2px;top:694.8px;font-size:23px;font-style:italic;color:#f2ee5a;-webkit-text-stroke:0.9px #f2ee5a;--w:185px">our Channel.......</div>
<div class="t fw" style="left:352.5px;top:694.8px;font-size:23px;font-style:italic;color:#f2ee5a;-webkit-text-stroke:0.9px #f2ee5a;--w:386px">HI Welcome to "Aanav Creations".</div>
<div class="t fw" style="left:746.5px;top:694.8px;font-size:23px;font-style:italic;color:#f2ee5a;-webkit-text-stroke:0.9px #f2ee5a;--w:368.5px">If You like this video don't Forget</div>
<div class="t fw" style="left:1124px;top:694.8px;font-size:23px;font-style:italic;color:#f2ee5a;-webkit-text-stroke:0.9px #f2ee5a;--w:170px">to Like the vid</div><script>
document.querySelectorAll('.fw').forEach(function(e){
 var w=parseFloat(getComputedStyle(e).getPropertyValue('--w'));
 var r=e.getBoundingClientRect().width;
 if(w&&r){e.style.transformOrigin='0 0';e.style.transform='scaleX('+(w/r)+')';}
});
</script></body></html>
